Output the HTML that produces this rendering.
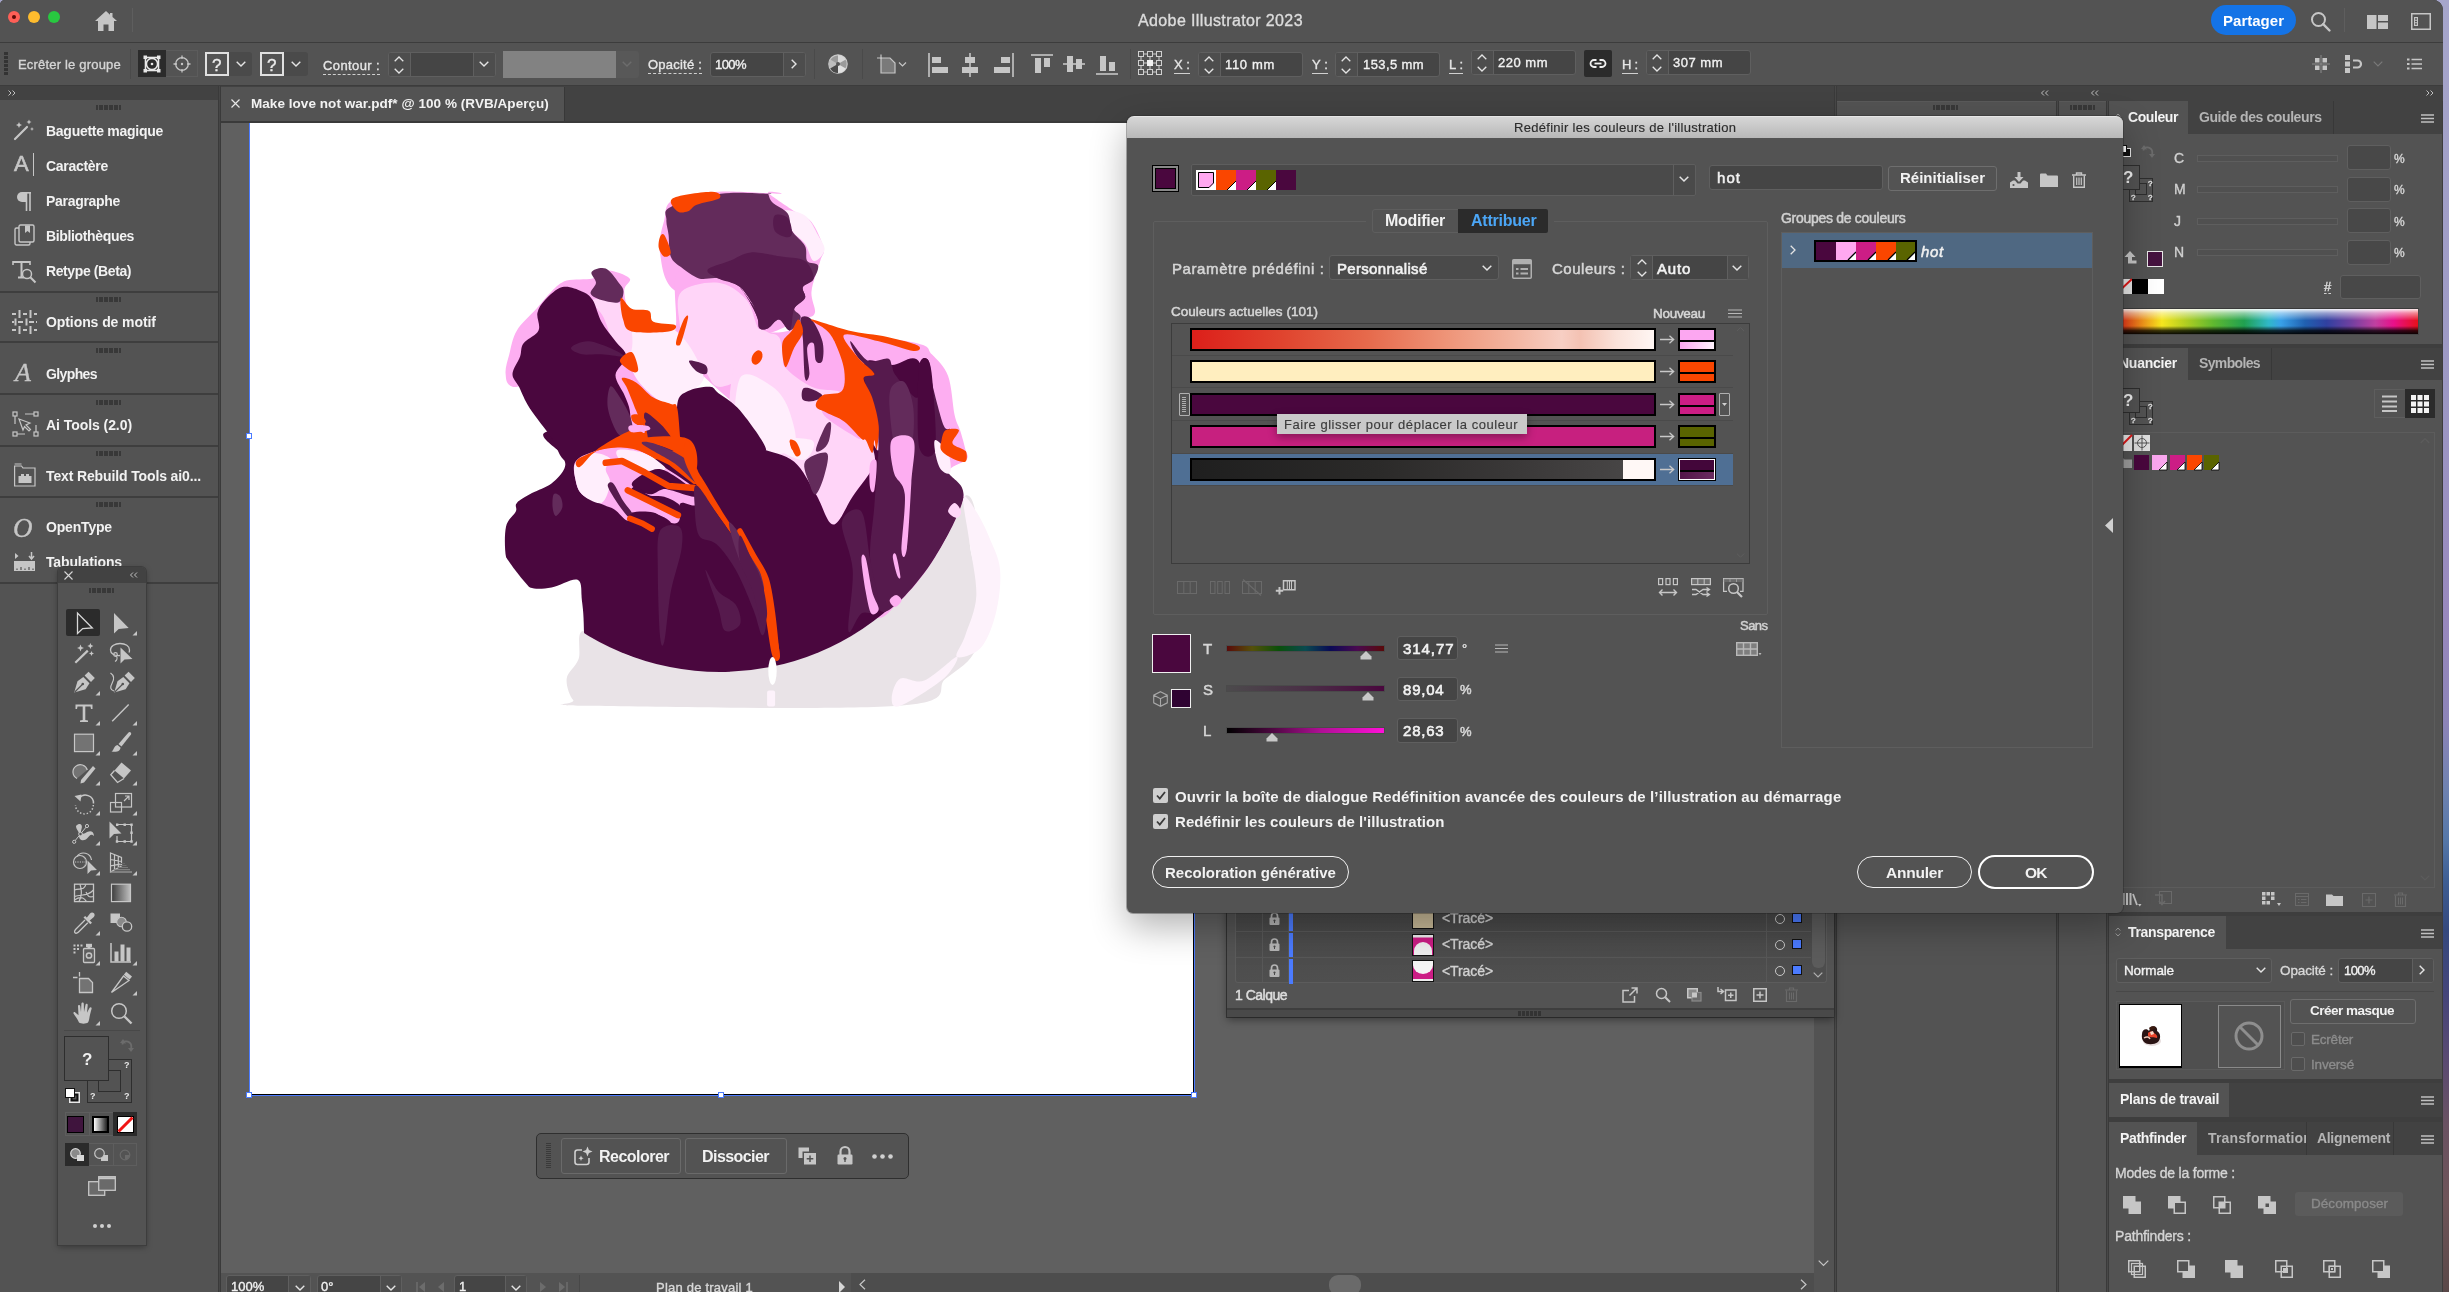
<!DOCTYPE html>
<html lang="fr"><head><meta charset="utf-8"><title>Adobe Illustrator 2023</title>
<style>
html,body{margin:0;padding:0}
body{width:2449px;height:1292px;overflow:hidden;position:relative;background:linear-gradient(180deg,#a6a6cb 0%,#9c98c4 30%,#9888bd 48%,#8c84b8 56%,#6f82b0 61%,#5577a8 65%,#3f5f94 68%,#35497e 72%,#45457a 77%,#5a4a72 82%,#6a5262 87%,#6e5458 93%,#5a4848 100%);font-family:"Liberation Sans",sans-serif;font-size:13px;color:#dedede}
.a{position:absolute;box-sizing:border-box}
.t{position:absolute;white-space:nowrap;line-height:1;font-size:13px;color:#dedede}
.b{font-weight:bold}
.w{color:#f2f2f2}
.dim{color:#8a8a8a}
svg{position:absolute;overflow:visible}
.fld{position:absolute;box-sizing:border-box;background:#454545;border:1px solid #5f5f5f;border-radius:3px}
.vd{position:absolute;width:1px;background:#5f5f5f}
.grip{position:absolute;height:5px;width:25px!important;background:linear-gradient(90deg,#383838 0 2px,transparent 2px 3px,#383838 3px 7px,transparent 7px 8px,#383838 8px 12px,transparent 12px 13px,#383838 13px 17px,transparent 17px 18px,#383838 18px 22px,transparent 22px 23px,#383838 23px 25px)}
#win{left:0;top:0;width:2443px;height:1292px;background:#535353;border-radius:5px 10px 0 0;overflow:hidden;box-shadow:inset 1px 1px 0 #474747,inset -1px 0 0 #3d3d3d}
.t:not(.b){-webkit-text-stroke:0.35px currentColor}
#dlg .t:not(.b){-webkit-text-stroke:0.5px currentColor}
.t{will-change:transform}

</style></head>
<body>
<div class="a" id="win">
<!-- title bar -->
<div class="a" style="left:0;top:0;width:2443px;height:42px;background:#535353"></div>
<div class="a" style="left:0;top:42px;width:2443px;height:1px;background:#3c3c3c"></div>
<div class="a" style="left:8px;top:11px;width:12px;height:12px;border-radius:50%;background:#fe5f57"></div>
<div class="a" style="left:12px;top:15px;width:4px;height:4px;border-radius:50%;background:#5a0a06"></div>
<div class="a" style="left:28px;top:11px;width:12px;height:12px;border-radius:50%;background:#febc2e"></div>
<div class="a" style="left:48px;top:11px;width:12px;height:12px;border-radius:50%;background:#28c840"></div>
<svg style="left:94px;top:10px" width="24" height="22" viewBox="0 0 24 22"><path d="M12 1 L1 11 H4 V21 H9.5 V14.5 H14.5 V21 H20 V11 H23 L18.5 7 V3 H16 V4.7 Z" fill="#c6c6c6"></path></svg>
<div class="a" style="left:132px;top:8px;width:1px;height:24px;background:#5e5e5e"></div>
<span class="t" style="left: 1138px; font-size: 16px; color: rgb(220, 220, 220); letter-spacing: 0.38px; top: 12.5px;">Adobe Illustrator 2023</span>
<div class="a" style="left:2211px;top:5px;width:85px;height:30px;border-radius:15px;background:#1473e6"></div>
<span class="t b" style="left: 2223px; font-size: 15px; color: rgb(255, 255, 255); letter-spacing: 0.02px; top: 13.3px;">Partager</span>
<svg style="left:2308px;top:9px" width="24" height="24" viewBox="0 0 24 24"><circle cx="10.5" cy="10.5" r="6.5" fill="none" stroke="#c6c6c6" stroke-width="2"></circle><path d="M15.2 15.2 L21.5 21.5" stroke="#c6c6c6" stroke-width="2.4" stroke-linecap="round"></path></svg>
<div class="a" style="left:2344px;top:8px;width:1px;height:24px;background:#5e5e5e"></div>
<svg style="left:2367px;top:15px" width="21" height="14" viewBox="0 0 21 14"><path d="M0 0 H9.5 V14 H0 Z M11 0 H21 V6 H11 Z M11 7.5 H21 V14 H11 Z" fill="#c6c6c6"></path></svg>
<svg style="left:2411px;top:13px" width="20" height="17" viewBox="0 0 20 17"><rect x="0.75" y="0.75" width="18.5" height="15.5" fill="none" stroke="#c6c6c6" stroke-width="1.5"></rect><rect x="3" y="4" width="4" height="9" fill="#c6c6c6"></rect><rect x="4" y="5.3" width="2" height="1.4" fill="#535353"></rect><rect x="4" y="7.8" width="2" height="1.4" fill="#535353"></rect><rect x="4" y="10.3" width="2" height="1.4" fill="#535353"></rect></svg>
<!-- control bar -->
<div class="a" style="left:0;top:43px;width:2443px;height:42px;background:#535353"></div>
<div class="a" style="left:0;top:85px;width:2443px;height:1px;background:#3c3c3c"></div>
</div>
<div class="a" id="ctl" style="left:0;top:0;width:2443px;height:86px">
<div class="a" style="left:4px;top:52px;width:4px;height:24px;background:repeating-linear-gradient(180deg,#333 0 3px,transparent 3px 4px)"></div>
<span class="t" style="left: 18px; color: rgb(212, 212, 212); letter-spacing: 0.19px; top: 58px;">Ecrêter le groupe</span>
<div class="a" style="left:130px;top:49px;width:1px;height:30px;background:#4a4a4a"></div>
<div class="a" style="left:138px;top:50px;width:28px;height:27px;background:#2b2b2b"></div>
<svg style="left:143px;top:55px" width="18" height="18" viewBox="0 0 18 18"><rect x="2.5" y="2.5" width="13" height="13" fill="none" stroke="#e8e8e8" stroke-width="1.6"></rect><circle cx="9" cy="9" r="5.6" fill="none" stroke="#e8e8e8" stroke-width="1.6"></circle><circle cx="9" cy="9" r="1.3" fill="#e8e8e8"></circle><path d="M0.5 0.5h3.5v3.5h-3.5z M14 0.5h3.5v3.5H14z M0.5 14h3.5v3.5h-3.5z M14 14h3.5v3.5H14z" fill="#e8e8e8"></path></svg>
<div class="a" style="left:166px;top:50px;width:32px;height:27px;border:1px solid #5c5c5c;border-left:none"></div>
<svg style="left:173px;top:55px" width="18" height="18" viewBox="0 0 18 18"><circle cx="9" cy="9" r="6.3" fill="none" stroke="#c6c6c6" stroke-width="1.3"></circle><circle cx="9" cy="9" r="1.2" fill="#c6c6c6"></circle><path d="M9 0.5V4 M9 14V17.5 M0.5 9H4 M14 9H17.5" stroke="#c6c6c6" stroke-width="1.3"></path></svg>
<!-- ? boxes -->
<div class="a" style="left:228px;top:52px;width:24px;height:24px;background:#4a4a4a;border-radius:0 3px 3px 0"></div>
<div class="a" style="left:205px;top:52px;width:24px;height:24px;border:2px solid #e0e0e0;background:#535353"></div>
<span class="t" style="left: 212px; font-size: 17px; color: rgb(238, 238, 238); top: 56.6px;">?</span>
<svg style="left:236px;top:61px" width="10" height="6" viewBox="0 0 10 6"><path d="M0.7 0.7 L5 5 L9.3 0.7" fill="none" stroke="#e4e4e4" stroke-width="1.4"></path></svg>
<div class="a" style="left:283px;top:52px;width:25px;height:24px;background:#4a4a4a;border-radius:0 3px 3px 0"></div>
<div class="a" style="left:260px;top:52px;width:24px;height:24px;border:2px solid #e0e0e0;background:#535353"></div>
<span class="t" style="left: 267px; font-size: 17px; color: rgb(238, 238, 238); top: 56.6px;">?</span>
<svg style="left:291px;top:61px" width="10" height="6" viewBox="0 0 10 6"><path d="M0.7 0.7 L5 5 L9.3 0.7" fill="none" stroke="#e4e4e4" stroke-width="1.4"></path></svg>
<span class="t" style="left: 323px; color: rgb(230, 230, 230); border-bottom: 1px dashed rgb(208, 208, 208); padding-bottom: 2px; letter-spacing: 0.39px; top: 59px;">Contour :</span>
<!-- stroke weight stepper -->
<div class="fld" style="left:388px;top:52px;width:108px;height:25px"></div>
<div class="a" style="left:389px;top:53px;width:21px;height:23px;background:#4d4d4d;border-radius:2px 0 0 2px"></div>
<div class="a" style="left:474px;top:53px;width:21px;height:23px;background:#4d4d4d;border-radius:0 2px 2px 0"></div>
<div class="vd" style="left:410px;top:53px;height:23px"></div>
<div class="vd" style="left:473px;top:53px;height:23px"></div>
<svg style="left:394px;top:56px" width="10" height="18" viewBox="0 0 10 18"><path d="M0.7 5.3 L5 1 L9.3 5.3 M0.7 12.7 L5 17 L9.3 12.7" fill="none" stroke="#e4e4e4" stroke-width="1.3"></path></svg>
<svg style="left:479px;top:61px" width="10" height="6" viewBox="0 0 10 6"><path d="M0.7 0.7 L5 5 L9.3 0.7" fill="none" stroke="#e4e4e4" stroke-width="1.4"></path></svg>
<!-- brush gray -->
<div class="a" style="left:503px;top:51px;width:113px;height:27px;background:#828282"></div>
<div class="a" style="left:616px;top:51px;width:23px;height:27px;background:#585858;border-radius:0 3px 3px 0"></div>
<svg style="left:622px;top:61px" width="10" height="6" viewBox="0 0 10 6"><path d="M0.7 0.7 L5 5 L9.3 0.7" fill="none" stroke="#6c6c6c" stroke-width="1.4"></path></svg>
<span class="t" style="left: 648px; color: rgb(230, 230, 230); border-bottom: 1px dashed rgb(208, 208, 208); padding-bottom: 2px; letter-spacing: 0.22px; top: 58px;">Opacité :</span>
<div class="fld" style="left:710px;top:52px;width:96px;height:25px"></div>
<div class="a" style="left:784px;top:53px;width:21px;height:23px;background:#4d4d4d;border-radius:0 2px 2px 0"></div>
<div class="vd" style="left:783px;top:53px;height:23px"></div>
<span class="t w" style="left: 715px; letter-spacing: -0.56px; top: 58px;">100%</span>
<svg style="left:791px;top:59px" width="6" height="10" viewBox="0 0 6 10"><path d="M0.7 0.7 L5 5 L0.7 9.3" fill="none" stroke="#e4e4e4" stroke-width="1.4"></path></svg>
<div class="a" style="left:814px;top:49px;width:1px;height:30px;background:#4a4a4a"></div>
<!-- globe / recolor -->
<svg style="left:828px;top:54px" width="20" height="20" viewBox="0 0 20 20"><circle cx="10" cy="10" r="9.2" fill="#9a9a9a" stroke="#c8c8c8" stroke-width="1.2"></circle><path d="M10 10 L10 1 A9 9 0 0 1 17.8 5.5 Z" fill="#d8d8d8"></path><path d="M10 10 L17.8 14.5 A9 9 0 0 1 10 19 Z" fill="#e0e0e0"></path><path d="M10 10 L2.2 14.5 A9 9 0 0 1 2.2 5.5 Z" fill="#bdbdbd"></path><path d="M10 10 L10 19 A9 9 0 0 1 2.2 14.5 Z" fill="#4a4a4a"></path><circle cx="10" cy="10" r="2" fill="#555"></circle></svg>
<div class="a" style="left:862px;top:49px;width:1px;height:30px;background:#4a4a4a"></div>
<!-- artboard icon -->
<svg style="left:876px;top:54px" width="32" height="22" viewBox="0 0 32 22"><path d="M5 4 H14 L19 9 V19 H5 Z" fill="#7a7a7a" stroke="#c6c6c6" stroke-width="1.2"></path><path d="M1 4H6 M5 0.5V5" stroke="#c6c6c6" stroke-width="1.2"></path><path d="M23 8.5 L26.5 12 L30 8.5" fill="none" stroke="#c6c6c6" stroke-width="1.2"></path></svg>
<!-- align icons -->
<svg style="left:928px;top:53px" width="20" height="24" viewBox="0 0 20 24"><path d="M1 0V24" stroke="#c6c6c6" stroke-width="1.6"></path><rect x="4" y="4" width="9" height="6" fill="#c6c6c6"></rect><rect x="4" y="14" width="16" height="6" fill="#c6c6c6"></rect></svg>
<svg style="left:961px;top:53px" width="18" height="24" viewBox="0 0 18 24"><path d="M9 0V24" stroke="#c6c6c6" stroke-width="1.6"></path><rect x="4" y="4" width="10" height="6" fill="#c6c6c6"></rect><rect x="1" y="14" width="16" height="6" fill="#c6c6c6"></rect></svg>
<svg style="left:994px;top:53px" width="20" height="24" viewBox="0 0 20 24"><path d="M19 0V24" stroke="#c6c6c6" stroke-width="1.6"></path><rect x="7" y="4" width="9" height="6" fill="#c6c6c6"></rect><rect x="0" y="14" width="16" height="6" fill="#c6c6c6"></rect></svg>
<svg style="left:1031px;top:54px" width="22" height="20" viewBox="0 0 22 20"><path d="M0 1H22" stroke="#c6c6c6" stroke-width="1.6"></path><rect x="4" y="4" width="6" height="15" fill="#c6c6c6"></rect><rect x="13" y="4" width="6" height="9" fill="#c6c6c6"></rect></svg>
<svg style="left:1063px;top:55px" width="22" height="18" viewBox="0 0 22 18"><path d="M0 9H22" stroke="#c6c6c6" stroke-width="1.6"></path><rect x="4" y="1" width="6" height="16" fill="#c6c6c6"></rect><rect x="13" y="4" width="6" height="10" fill="#c6c6c6"></rect></svg>
<svg style="left:1096px;top:55px" width="22" height="20" viewBox="0 0 22 20"><path d="M0 19H22" stroke="#c6c6c6" stroke-width="1.6"></path><rect x="4" y="1" width="6" height="15" fill="#c6c6c6"></rect><rect x="13" y="7" width="6" height="9" fill="#c6c6c6"></rect></svg>
<div class="a" style="left:1130px;top:49px;width:1px;height:30px;background:#4a4a4a"></div>
<!-- ref point -->
<svg style="left:1138px;top:51px" width="24" height="24" viewBox="0 0 24 24"><g fill="none" stroke="#d0d0d0" stroke-width="1"><rect x="0.5" y="0.5" width="5" height="5"></rect><rect x="9.5" y="0.5" width="5" height="5"></rect><rect x="18.5" y="0.5" width="5" height="5"></rect><rect x="0.5" y="9.5" width="5" height="5"></rect><rect x="18.5" y="9.5" width="5" height="5"></rect><rect x="0.5" y="18.5" width="5" height="5"></rect><rect x="9.5" y="18.5" width="5" height="5"></rect><rect x="18.5" y="18.5" width="5" height="5"></rect><path d="M6 3H9 M15 3H18 M6 21H9 M15 21H18 M3 6V9 M3 15V18 M21 6V9 M21 15V18 M6 12H9 M15 12H18 M12 6V9 M12 15V18"></path></g><rect x="9" y="9" width="6" height="6" fill="#f0f0f0"></rect></svg>
<span class="t" style="left: 1174px; color: rgb(230, 230, 230); border-bottom: 1px solid rgb(208, 208, 208); padding-bottom: 2px; letter-spacing: 0.03px; top: 58px;">X :</span>
<div class="fld" style="left:1198px;top:52px;width:105px;height:25px"></div>
<div class="a" style="left:1199px;top:53px;width:21px;height:23px;background:#4d4d4d;border-radius:2px 0 0 2px"></div>
<div class="vd" style="left:1220px;top:53px;height:23px"></div>
<svg style="left:1204px;top:56px" width="10" height="18" viewBox="0 0 10 18"><path d="M0.7 5.3 L5 1 L9.3 5.3 M0.7 12.7 L5 17 L9.3 12.7" fill="none" stroke="#e4e4e4" stroke-width="1.3"></path></svg>
<span class="t w" style="left: 1225px; letter-spacing: 0.67px; top: 58px;">110 mm</span>
<span class="t" style="left: 1312px; color: rgb(230, 230, 230); border-bottom: 1px solid rgb(208, 208, 208); padding-bottom: 2px; letter-spacing: 0.11px; top: 58px;">Y :</span>
<div class="fld" style="left:1335px;top:52px;width:105px;height:25px"></div>
<div class="a" style="left:1336px;top:53px;width:21px;height:23px;background:#4d4d4d;border-radius:2px 0 0 2px"></div>
<div class="vd" style="left:1357px;top:53px;height:23px"></div>
<svg style="left:1341px;top:56px" width="10" height="18" viewBox="0 0 10 18"><path d="M0.7 5.3 L5 1 L9.3 5.3 M0.7 12.7 L5 17 L9.3 12.7" fill="none" stroke="#e4e4e4" stroke-width="1.3"></path></svg>
<span class="t w" style="left: 1363px; letter-spacing: 0.4px; top: 58px;">153,5 mm</span>
<span class="t" style="left: 1449px; color: rgb(230, 230, 230); border-bottom: 1px solid rgb(208, 208, 208); padding-bottom: 2px; letter-spacing: 0.01px; top: 58px;">L :</span>
<div class="fld" style="left:1471px;top:50px;width:105px;height:25px"></div>
<div class="a" style="left:1472px;top:51px;width:21px;height:23px;background:#4d4d4d;border-radius:2px 0 0 2px"></div>
<div class="vd" style="left:1493px;top:51px;height:23px"></div>
<svg style="left:1477px;top:54px" width="10" height="18" viewBox="0 0 10 18"><path d="M0.7 5.3 L5 1 L9.3 5.3 M0.7 12.7 L5 17 L9.3 12.7" fill="none" stroke="#e4e4e4" stroke-width="1.3"></path></svg>
<span class="t w" style="left: 1498px; letter-spacing: 0.51px; top: 56px;">220 mm</span>
<div class="a" style="left:1584px;top:50px;width:28px;height:27px;background:#2b2b2b;border-radius:2px"></div>
<svg style="left:1589px;top:58px" width="18" height="11" viewBox="0 0 18 11"><path d="M7.5 2 H5 A3.5 3.5 0 0 0 5 9 H7.5 M10.5 2 H13 A3.5 3.5 0 0 1 13 9 H10.5" fill="none" stroke="#f0f0f0" stroke-width="1.8"></path><path d="M5.5 5.5 H12.5" stroke="#f0f0f0" stroke-width="1.8"></path></svg>
<span class="t" style="left: 1622px; color: rgb(230, 230, 230); border-bottom: 1px solid rgb(208, 208, 208); padding-bottom: 2px; letter-spacing: -0.21px; top: 58px;">H :</span>
<div class="fld" style="left:1646px;top:50px;width:105px;height:25px"></div>
<div class="a" style="left:1647px;top:51px;width:21px;height:23px;background:#4d4d4d;border-radius:2px 0 0 2px"></div>
<div class="vd" style="left:1668px;top:51px;height:23px"></div>
<svg style="left:1652px;top:54px" width="10" height="18" viewBox="0 0 10 18"><path d="M0.7 5.3 L5 1 L9.3 5.3 M0.7 12.7 L5 17 L9.3 12.7" fill="none" stroke="#e4e4e4" stroke-width="1.3"></path></svg>
<span class="t w" style="left: 1673px; letter-spacing: 0.51px; top: 56px;">307 mm</span>
<!-- right icons -->
<svg style="left:2312px;top:55px" width="18" height="18" viewBox="0 0 18 18"><path d="M9 0V18 M0 9H18" stroke="#8c8c8c" stroke-width="1"></path><rect x="3" y="3" width="4.5" height="4.5" fill="#c6c6c6"></rect><rect x="10.5" y="3" width="4.5" height="4.5" fill="#c6c6c6"></rect><rect x="3" y="10.5" width="4.5" height="4.5" fill="#c6c6c6"></rect><rect x="10.5" y="10.5" width="4.5" height="4.5" fill="#c6c6c6"></rect></svg>
<svg style="left:2345px;top:55px" width="20" height="18" viewBox="0 0 20 18"><rect x="0" y="0" width="5" height="5" fill="#c6c6c6"></rect><rect x="0" y="6.5" width="5" height="5" fill="#c6c6c6"></rect><rect x="0" y="13" width="5" height="5" fill="#c6c6c6"></rect><path d="M8 5.5 H12.5 A3.5 3.5 0 0 1 12.5 12.5 H8" fill="none" stroke="#c6c6c6" stroke-width="2.2"></path></svg>
<svg style="left:2373px;top:61px" width="10" height="6" viewBox="0 0 10 6"><path d="M0.7 0.7 L5 5 L9.3 0.7" fill="none" stroke="#7a7a7a" stroke-width="1.2"></path></svg>
<svg style="left:2407px;top:58px" width="15" height="12" viewBox="0 0 15 12"><path d="M0 1.5H2.5 M0 6H2.5 M0 10.5H2.5" stroke="#c6c6c6" stroke-width="2"></path><path d="M4.5 1.5H15 M4.5 6H15 M4.5 10.5H15" stroke="#c6c6c6" stroke-width="1.4"></path></svg>
</div>
<div class="a" id="left" style="left:0;top:86px;width:221px;height:1206px">
<div class="a" style="left:0;top:0;width:218px;height:14px;background:#424242"></div>
<div class="a" style="left:0;top:14px;width:218px;height:1192px;background:#535353"></div>
<div class="a" style="left:218px;top:0;width:1px;height:1206px;background:#3a3a3a"></div>
<div class="a" style="left:219px;top:0;width:1px;height:1206px;background:#464646"></div>
<div class="a" style="left:220px;top:0;width:1px;height:1206px;background:#3a3a3a"></div>
<svg style="left:8px;top:4px" width="8" height="6" viewBox="0 0 8 6"><path d="M0.5 0.5 L3 3 L0.5 5.5 M4.5 0.5 L7 3 L4.5 5.5" fill="none" stroke="#c0c0c0" stroke-width="1"></path></svg>
<div class="grip" style="left:96px;top:19px"></div>
<span class="t b w" style="left: 46px; font-size: 14px; letter-spacing: -0.27px; top: 38.1px;">Baguette magique</span>
<span class="t b w" style="left: 46px; font-size: 14px; letter-spacing: -0.29px; top: 73.1px;">Caractère</span>
<span class="t b w" style="left: 46px; font-size: 14px; letter-spacing: -0.3px; top: 108.1px;">Paragraphe</span>
<span class="t b w" style="left: 46px; font-size: 14px; letter-spacing: -0.35px; top: 143.1px;">Bibliothèques</span>
<span class="t b w" style="left: 46px; font-size: 14px; letter-spacing: -0.4px; top: 178.1px;">Retype (Beta)</span>
<div class="a" style="left:0;top:205px;width:218px;height:2px;background:#3e3e3e"></div>
<div class="grip" style="left:96px;top:211px"></div>
<span class="t b w" style="left: 46px; font-size: 14px; letter-spacing: -0.08px; top: 229.1px;">Options de motif</span>
<div class="a" style="left:0;top:255px;width:218px;height:2px;background:#3e3e3e"></div>
<div class="grip" style="left:96px;top:262px"></div>
<span class="t b w" style="left: 46px; font-size: 14px; letter-spacing: -0.61px; top: 281.1px;">Glyphes</span>
<div class="a" style="left:0;top:307px;width:218px;height:2px;background:#3e3e3e"></div>
<div class="grip" style="left:96px;top:314px"></div>
<span class="t b w" style="left: 46px; font-size: 14px; letter-spacing: -0.06px; top: 332.1px;">Ai Tools (2.0)</span>
<div class="a" style="left:0;top:359px;width:218px;height:2px;background:#3e3e3e"></div>
<div class="grip" style="left:96px;top:365px"></div>
<span class="t b w" style="left: 46px; font-size: 14px; letter-spacing: -0.13px; top: 383.1px;">Text Rebuild Tools ai0...</span>
<div class="a" style="left:0;top:410px;width:218px;height:2px;background:#3e3e3e"></div>
<div class="grip" style="left:96px;top:416px"></div>
<span class="t b w" style="left: 46px; font-size: 14px; letter-spacing: -0.18px; top: 434.1px;">OpenType</span>
<span class="t b w" style="left: 46px; font-size: 14px; letter-spacing: -0.14px; top: 469.1px;">Tabulations</span>
<div class="a" style="left:0;top:496px;width:218px;height:2px;background:#3e3e3e"></div>
<!-- panel icons -->
<svg style="left:13px;top:33px" width="24" height="24" viewBox="0 0 24 24"><path d="M2 20 L14 8" stroke="#c6c6c6" stroke-width="2.2" stroke-linecap="round"></path><path d="M6 3 l0.9 2.1 2.1 0.9 -2.1 0.9 -0.9 2.1 -0.9 -2.1 -2.1 -0.9 2.1 -0.9z M16 0.5 l0.8 1.7 1.7 0.8 -1.7 0.8 -0.8 1.7 -0.8 -1.7 -1.7 -0.8 1.7 -0.8z M19 8 l0.6 1.4 1.4 0.6 -1.4 0.6 -0.6 1.4 -0.6 -1.4 -1.4 -0.6 1.4 -0.6z" fill="#c6c6c6"></path></svg>
<span class="t" style="left: 14px; font-size: 22px; color: rgb(198, 198, 198); -webkit-text-stroke: 0.6px rgb(198, 198, 198); top: 67.4px;">A</span>
<div class="a" style="left:33px;top:67px;width:1px;height:23px;background:#c6c6c6"></div>
<svg style="left:16px;top:106px" width="16" height="20" viewBox="0 0 16 20"><path d="M14 0 V19 M10.5 0 V19" stroke="#c6c6c6" stroke-width="1.6"></path><path d="M11 0 H6 A5 5 0 0 0 6 10 H11 Z" fill="#c6c6c6"></path><path d="M8 0.8 H15" stroke="#c6c6c6" stroke-width="1.6"></path></svg>
<svg style="left:14px;top:138px" width="22" height="22" viewBox="0 0 22 22"><rect x="1" y="4" width="15" height="17" rx="1.5" fill="none" stroke="#c6c6c6" stroke-width="1.4"></rect><rect x="5" y="1" width="15" height="17" rx="1.5" fill="#535353" stroke="#c6c6c6" stroke-width="1.4"></rect><path d="M11 1.5 V9 L13.5 7 L16 9 V1.5 Z" fill="#c6c6c6"></path></svg>
<svg style="left:12px;top:174px" width="26" height="24" viewBox="0 0 26 24"><path d="M1 2 H18 M9.5 2 V17 M6 17.5 H12" stroke="#c6c6c6" stroke-width="2"></path><path d="M1 1 V5 M18 1 V5" stroke="#c6c6c6" stroke-width="1.6"></path><circle cx="15" cy="14" r="4.5" fill="#535353" stroke="#c6c6c6" stroke-width="1.5"></circle><path d="M18.3 17.3 L23.5 22.5" stroke="#c6c6c6" stroke-width="2"></path></svg>
<svg style="left:12px;top:224px" width="25" height="24" viewBox="0 0 25 24"><g stroke="#c6c6c6" stroke-width="2"><path d="M0 4H4 M7.5 0V8 M11 4H15 M18.5 0V8 M22 4H25"></path><path d="M3.5 8.5V15.5 M0 12H2 M6 12H11 M14.5 8.5V15.5 M17 12H22 M24 12H25"></path><path d="M0 20H4 M7.5 16V24 M11 20H15 M18.5 16V24 M22 20H25"></path></g></svg>
<span class="t" style="left: 15px; font-size: 26px; color: rgb(198, 198, 198); font-family: &quot;Liberation Serif&quot;, &quot;DejaVu Serif&quot;, serif; font-style: italic; top: 274px;">A</span>
<svg style="left:12px;top:324.500px" width="28" height="27" viewBox="0 0 28 27"><g fill="none" stroke="#c6c6c6" stroke-width="1.2"><rect x="1" y="1" width="4" height="4"></rect><rect x="22" y="1" width="4" height="4"></rect><rect x="1" y="21" width="4" height="4"></rect><rect x="22" y="21" width="4" height="4"></rect><path d="M13 3H22 M3 5V13 M5 23H13 M24 14V21"></path><path d="M7 8 L18 12 L14 14 L18.5 18.5 L17 20 L12.5 15.5 L11 19 Z"></path></g></svg>
<svg style="left:14px;top:377px" width="22" height="24" viewBox="0 0 22 24"><path d="M0.6 3 V23 H21 V5 H9 L7.5 3 Z M0.6 1 H7.5" fill="none" stroke="#c6c6c6" stroke-width="1.2"></path><path d="M4.5 20 V13 H7 V11 H10 V13 H12 V11 H15 V13 H17.5 V20 Z" fill="#c6c6c6"></path></svg>
<span class="t" style="left: 13px; font-size: 27px; color: rgb(198, 198, 198); font-family: &quot;Liberation Serif&quot;, serif; font-style: italic; top: 428.6px;">O</span>
<svg style="left:14px;top:466px" width="22" height="20" viewBox="0 0 22 20"><path d="M0 9 H21 V19 H0 Z" fill="#c6c6c6"></path><path d="M3 16.5v1.5 M7 15v3 M11 16.5v1.5 M15 15v3 M19 16.5v1.5" stroke="#535353" stroke-width="1.2"></path><path d="M1 1 L4.5 4 L1 7 Z" fill="#c6c6c6"></path><path d="M17.5 0 V6 M15 4 L17.5 7 L20 4" stroke="#c6c6c6" stroke-width="1.5" fill="none"></path></svg>
</div>
<div class="a" id="doc" style="left:221px;top:86px;width:1616px;height:1206px;background:#424242;overflow:hidden">
<div class="a" style="left:0;top:1px;width:343px;height:34px;background:#535353"></div>
<div class="a" style="left:343px;top:1px;width:1px;height:34px;background:#383838"></div>
<div class="a" style="left:0;top:35px;width:1616px;height:2px;background:#3a3a3a"></div>
<svg style="left:10px;top:13px" width="9" height="9" viewBox="0 0 9 9"><path d="M0.5 0.5 L8.5 8.5 M8.5 0.5 L0.5 8.5" stroke="#e6e6e6" stroke-width="1.2"></path></svg>
<span class="t b w" style="left: 30px; font-size: 13.5px; letter-spacing: 0.05px; top: 10.6px;">Make love not war.pdf* @ 100 % (RVB/Aperçu)</span>
<div class="a" style="left:0;top:37px;width:1593px;height:1150px;background:#606060"></div>
<div class="a" style="left:28px;top:37px;width:945px;height:972px;background:#fff;border-right:1px solid #000;border-bottom:1px solid #000"></div>
<div class="a" style="left:-221px;top:-86px;width:1220px;height:1000px"><svg style="left:0;top:0" width="1220" height="1000" viewBox="0 0 1220 1000">
<defs><clipPath id="circ"><circle cx="720" cy="415" r="257"></circle></clipPath></defs>
<path d="M584.1 630.8 C575.2 631.1 581.5 651.0 578.6 658.9 C575.7 666.9 567.6 671.6 566.7 678.5 C565.8 685.3 569.6 695.6 573.2 700.1 C576.8 704.7 534.0 704.8 588.4 705.8 C642.7 706.7 839.7 710.3 899.3 705.8 C958.9 701.2 933.1 688.1 945.9 678.5 C958.8 668.8 970.7 662.6 976.3 648.1 C981.9 633.7 980.6 609.1 979.5 591.7 C978.5 574.4 970.5 557.4 969.8 544.1 C969.1 530.7 976.3 519.3 975.2 511.5 C974.1 503.8 970.0 489.9 963.3 497.4 C956.6 505.0 947.0 538.8 935.1 557.1 C923.2 575.3 909.8 591.7 891.7 606.9 C873.7 622.1 852.0 637.6 826.7 648.1 C801.4 658.6 761.7 666.2 740.0 669.8 C718.3 673.4 714.8 672.0 696.8 669.8 C678.7 667.6 650.5 663.3 631.7 656.8 C613.0 650.3 592.9 630.4 584.1 630.8Z" fill="#e9e3e7"></path>
<path d="M963.3 497.4 C964.4 492.0 972.0 504.9 976.3 511.5 C980.6 518.2 985.3 527.8 989.3 537.6 C993.3 547.3 999.1 557.4 1000.1 570.1 C1001.2 582.7 999.1 600.4 995.8 613.4 C992.5 626.4 987.1 640.9 980.6 648.1 C974.1 655.3 959.3 658.9 956.8 656.8 C954.2 654.6 962.2 645.2 965.4 635.1 C968.7 625.0 975.6 611.3 976.3 596.1 C977.0 580.9 972.0 560.5 969.8 544.1 C967.6 527.6 962.2 502.9 963.3 497.4Z" fill="#fdf2fb"></path>
<path d="M891.7 698.0 C891.7 693.4 895.0 681.3 900.4 678.5 C905.8 675.6 914.9 684.2 924.3 680.6 C933.7 677.0 953.5 657.1 956.8 656.8 C960.0 656.4 953.2 670.3 943.8 678.5 C934.4 686.6 909.1 702.5 900.4 705.8 C891.7 709.0 891.7 702.5 891.7 698.0Z" fill="#fdf2fb"></path>
<path d="M505.6 373.8 C505.0 368.4 507.4 361.5 509.3 354.3 C511.1 347.0 512.3 338.0 516.9 330.4 C521.4 322.8 530.6 315.2 536.4 308.7 C542.1 302.2 546.5 296.1 551.5 291.4 C556.6 286.7 559.8 282.7 566.7 280.6 C573.6 278.4 586.0 280.1 592.7 278.4 C599.4 276.7 600.7 270.2 606.8 270.2 C613.0 270.2 626.7 274.8 629.6 278.4 C632.5 281.9 623.8 284.2 624.2 291.4 C624.5 298.6 628.3 314.5 631.7 321.7 C635.2 329.0 637.5 330.4 644.8 334.8 C652.0 339.1 665.3 340.9 675.1 347.8 C684.9 354.6 701.8 368.0 703.3 375.9 C704.7 383.9 688.5 390.0 683.8 395.4 C679.1 400.9 680.9 402.7 675.1 408.5 C669.3 414.2 656.3 424.4 649.1 430.1 C641.9 435.9 638.2 443.1 631.7 443.1 C625.2 443.1 624.5 439.5 610.1 430.1 C595.6 420.7 561.3 394.0 545.0 386.8 C528.8 379.6 519.1 388.9 512.5 386.8 C505.9 384.6 506.1 379.2 505.6 373.8Z" fill="#fdaef1"></path>
<path d="M664.3 219.9 C666.4 211.2 663.9 205.0 672.9 200.3 C682.0 195.7 700.6 192.8 718.5 191.7 C736.3 190.6 771.7 193.7 780.0 193.8 C788.3 194.0 765.8 189.9 768.2 192.8 C770.5 195.7 787.0 206.3 794.2 211.2 C801.4 216.1 806.7 215.9 811.5 222.0 C816.4 228.2 822.0 241.5 823.5 248.0 C824.9 254.5 822.2 253.8 820.2 261.0 C818.2 268.3 812.4 282.7 811.5 291.4 C810.6 300.1 816.4 308.4 814.8 313.1 C813.2 317.8 810.6 316.0 801.8 319.6 C792.9 323.2 772.0 334.4 761.7 334.8 C751.4 335.1 743.6 327.5 740.0 321.7 C736.4 316.0 750.8 305.1 740.1 300.1 C729.5 295.0 689.6 299.3 676.2 291.4 C662.8 283.4 661.9 264.3 659.9 252.4 C657.9 240.5 662.1 228.5 664.3 219.9Z" fill="#fdaef1"></path>
<path d="M783.4 211.2 C785.5 208.7 799.3 211.5 805.0 215.5 C810.8 219.5 814.8 229.3 818.0 235.0 C821.3 240.8 825.3 245.9 824.5 250.2 C823.8 254.5 817.0 262.1 813.7 261.0 C810.5 260.0 808.6 248.8 805.0 243.7 C801.4 238.6 795.6 236.1 792.0 230.7 C788.4 225.3 781.2 213.7 783.4 211.2Z" fill="#ffeefc"></path>
<path d="M676.2 274.1 C679.6 266.8 686.1 276.2 696.8 278.4 C707.4 280.6 732.9 285.6 740.1 287.1 C747.3 288.5 736.8 280.2 740.0 287.1 C743.2 293.9 751.2 321.0 759.5 328.2 C767.8 335.5 782.8 331.9 789.9 330.4 C796.9 328.9 792.0 318.8 801.8 319.1 C811.5 319.5 829.1 328.5 848.4 332.6 C867.7 336.6 903.8 339.8 917.8 343.4 C931.7 347.0 926.8 348.8 931.8 354.3 C936.9 359.7 944.3 365.8 948.1 375.9 C951.9 386.1 952.6 405.9 954.6 415.0 C956.6 424.0 958.2 424.4 960.0 430.1 C961.8 435.9 964.4 444.7 965.4 449.6 C966.5 454.5 969.4 455.7 966.5 459.5 C963.6 463.3 948.6 466.2 948.1 472.5 C947.6 478.8 965.4 483.4 963.3 497.4 C961.1 511.5 945.6 539.9 935.1 557.1 C924.6 574.2 911.3 591.0 900.4 600.4 C889.6 609.8 882.4 625.7 870.1 613.4 C857.8 601.1 848.4 552.0 826.7 526.7 C805.0 501.4 747.8 476.1 740.0 461.7 C732.2 447.2 780.0 448.9 780.0 440.0 C780.0 431.1 752.9 419.1 740.1 408.5 C727.3 397.8 714.1 386.1 703.3 375.9 C692.4 365.8 679.6 356.8 675.1 347.8 C670.6 338.7 676.0 334.0 676.2 321.7 C676.4 309.5 672.8 281.3 676.2 274.1Z" fill="#fdaef1"></path>
<path d="M681.6 291.4 C688.1 284.9 707.6 281.3 718.5 282.7 C729.3 284.2 739.8 292.1 746.6 300.1 C753.5 308.0 754.1 323.9 759.6 330.4 C765.2 336.9 776.6 329.7 780.0 339.1 C783.4 348.5 784.9 380.3 780.0 386.8 C775.2 393.3 761.2 378.1 751.0 378.1 C740.7 378.1 726.0 387.9 718.5 386.8 C710.9 385.7 710.5 377.4 705.4 371.6 C700.4 365.8 692.4 360.4 688.1 352.1 C683.8 343.8 680.5 331.9 679.4 321.7 C678.4 311.6 675.1 297.9 681.6 291.4Z" fill="#ffd5f8"></path>
<path d="M740.0 339.1 C745.4 319.9 765.3 330.4 772.5 334.8 C779.7 339.1 776.9 356.4 783.4 365.1 C789.9 373.8 801.8 382.1 811.5 386.8 C821.3 391.5 840.1 388.9 841.9 393.3 C843.7 397.6 819.1 404.8 822.4 412.8 C825.6 420.7 853.4 434.8 861.4 441.0 C869.3 447.1 890.3 448.2 870.1 449.6 C849.8 451.1 761.7 468.1 740.0 449.6 C718.3 431.2 734.6 358.2 740.0 339.1Z" fill="#ffd5f8"></path>
<path d="M740.0 440.0 C758.1 438.6 847.7 436.0 870.1 440.0 C892.5 444.0 877.3 454.5 874.4 463.8 C871.5 473.2 859.6 486.2 852.7 496.4 C845.9 506.5 839.4 524.9 833.2 524.5 C827.1 524.2 822.4 504.7 815.9 494.2 C809.4 483.7 803.2 469.3 794.2 461.7 C785.2 454.1 770.7 452.3 761.7 448.7 C752.6 445.1 721.9 441.4 740.0 440.0Z" fill="#ffd5f8"></path>
<path d="M740.0 378.1 C745.4 367.6 764.2 381.0 772.5 386.8 C780.8 392.6 786.6 402.3 789.9 412.8 C793.1 423.3 800.3 443.5 792.0 449.6 C783.7 455.8 748.7 461.6 740.0 449.6 C731.3 437.7 734.6 388.6 740.0 378.1Z" fill="#ffeefc"></path>
<path d="M761.7 440.0 C766.4 437.8 804.3 436.7 811.5 440.0 C818.8 443.3 809.7 457.3 805.0 459.5 C800.3 461.7 790.6 456.3 783.4 453.0 C776.1 449.8 757.0 442.2 761.7 440.0Z" fill="#ffeefc"></path>
<path d="M631.7 331.5 C639.3 327.5 663.2 323.0 675.1 330.4 C687.0 337.8 701.8 365.1 703.3 375.9 C704.7 386.8 688.5 390.4 683.8 395.4 C679.1 400.5 679.4 405.6 675.1 406.3 C670.8 407.0 664.3 404.5 657.8 399.8 C651.3 395.1 640.8 385.7 636.1 378.1 C631.4 370.5 630.3 362.0 629.6 354.3 C628.9 346.5 624.2 335.5 631.7 331.5Z" fill="#ffeefc"></path>
<path d="M592.7 300.1 C595.6 297.9 614.4 299.2 620.9 304.4 C627.4 309.6 630.3 323.2 631.7 331.5 C633.2 339.8 632.5 352.3 629.6 354.3 C626.7 356.2 618.7 349.6 614.4 343.4 C610.1 337.3 607.2 324.6 603.6 317.4 C600.0 310.2 589.8 302.2 592.7 300.1Z" fill="#ffd5f8"></path>
<g clip-path="url(#circ)"><path d="M549.4 431.3 C530.6 433.9 559.8 449.0 562.4 455.2 C564.9 461.3 566.4 463.5 564.5 468.2 C562.7 472.9 557.0 479.2 551.5 483.4 C546.1 487.5 537.8 489.9 532.0 493.1 C526.2 496.4 519.6 499.8 516.9 502.9 C514.1 505.9 517.6 507.6 515.8 511.5 C514.0 515.5 507.6 519.1 506.0 526.7 C504.4 534.3 504.6 549.1 506.0 557.1 C507.5 565.0 510.7 569.3 514.7 574.4 C518.7 579.5 523.7 585.2 529.9 587.4 C536.0 589.6 543.6 588.7 551.5 587.4 C559.5 586.1 572.5 577.7 577.6 579.8 C582.6 582.0 580.8 591.6 581.9 600.4 C583.0 609.3 583.7 612.7 584.1 632.9 C584.4 653.2 551.4 707.0 584.1 721.8 C616.7 736.6 707.1 721.8 780.0 721.8 C853.0 721.8 981.5 761.6 1021.8 721.8 C1062.1 682.1 1031.6 520.8 1021.8 483.4 C1012.1 446.0 975.6 499.3 963.3 497.4 C951.0 495.6 952.8 479.9 948.1 472.5 C943.4 465.1 938.0 459.1 935.1 453.0 C932.2 446.9 933.3 450.7 930.8 435.7 C928.2 420.7 926.4 374.7 919.9 362.9 C913.4 351.2 900.4 365.5 891.7 365.1 C883.1 364.7 873.0 358.6 867.9 360.8 C862.8 362.9 860.3 370.2 861.4 378.1 C862.5 386.1 871.5 396.5 874.4 408.5 C877.3 420.4 879.5 444.4 878.7 449.6 C878.0 454.9 870.8 437.6 870.1 440.0 C869.3 442.4 877.3 454.5 874.4 463.8 C871.5 473.2 859.6 486.2 852.7 496.4 C845.9 506.5 839.4 524.9 833.2 524.5 C827.1 524.2 822.4 504.7 815.9 494.2 C809.4 483.7 803.2 469.3 794.2 461.7 C785.2 454.1 770.7 452.3 761.7 448.7 C752.6 445.1 739.3 439.8 740.0 440.0 C740.7 440.2 766.1 454.5 766.1 449.6 C766.2 444.7 748.1 420.0 740.1 410.6 C732.2 401.2 723.5 397.3 718.5 393.3 C713.4 389.3 714.8 387.1 709.8 386.8 C704.7 386.4 693.5 388.2 688.1 391.1 C682.7 394.0 678.7 394.4 677.3 404.1 C675.8 413.9 679.8 443.7 679.4 449.6 C679.1 455.6 696.8 443.1 675.1 440.0 C653.4 436.9 568.2 428.8 549.4 431.3Z" fill="#4a073e"></path></g>
<path d="M529.9 408.5 C524.4 400.0 521.9 392.6 519.0 386.8 C516.1 381.0 512.3 378.8 512.5 373.8 C512.7 368.7 518.3 361.5 520.1 356.4 C521.9 351.4 520.3 347.8 523.4 343.4 C526.4 339.1 536.2 335.5 538.5 330.4 C540.9 325.4 536.4 318.1 537.4 313.1 C538.5 308.0 540.9 304.4 545.0 300.1 C549.2 295.7 556.2 288.5 562.4 287.1 C568.5 285.6 576.8 289.2 581.9 291.4 C586.9 293.6 589.5 295.0 592.7 300.1 C596.0 305.1 597.6 314.9 601.4 321.7 C605.2 328.6 611.3 335.5 615.5 341.3 C619.6 347.0 626.3 350.8 626.3 356.4 C626.3 362.0 615.8 368.4 615.5 374.9 C615.2 381.4 622.2 389.5 624.6 395.4 C627.0 401.4 629.0 404.8 629.8 410.6 C630.6 416.4 631.1 424.7 629.6 430.1 C628.1 435.6 625.6 438.1 620.9 443.1 C616.2 448.2 610.4 457.4 601.4 460.5 C592.4 463.6 575.0 465.4 566.7 461.6 C558.4 457.8 557.7 446.6 551.5 437.7 C545.4 428.9 535.3 416.9 529.9 408.5Z" fill="#4a073e"></path>
<path d="M591.6 271.9 C593.3 269.5 601.2 266.8 605.7 268.6 C610.2 270.4 615.8 278.9 618.7 282.7 C621.7 286.5 623.5 288.1 623.5 291.4 C623.5 294.6 622.4 300.8 618.7 302.2 C615.1 303.7 606.1 301.5 601.4 300.1 C596.7 298.6 591.5 296.5 590.6 293.6 C589.7 290.7 595.8 286.3 596.0 282.7 C596.2 279.1 590.0 274.2 591.6 271.9Z" fill="#632b5b"></path>
<path d="M571.0 347.8 C572.1 345.6 581.2 340.9 588.4 341.3 C595.6 341.6 608.6 347.4 614.4 349.9 C620.2 352.5 625.2 355.7 623.1 356.4 C620.9 357.2 608.3 354.6 601.4 354.3 C594.5 353.9 586.9 355.3 581.9 354.3 C576.8 353.2 570.0 349.9 571.0 347.8Z" fill="#561a4d"></path>
<path d="M618.7 395.4 C622.0 400.1 627.4 409.2 629.6 415.0 C631.7 420.7 633.6 426.9 631.7 430.1 C629.9 433.4 622.7 438.1 618.7 434.5 C614.8 430.9 609.3 416.4 607.9 408.5 C606.5 400.5 608.3 388.9 610.1 386.8 C611.9 384.6 615.5 390.8 618.7 395.4Z" fill="#632b5b"></path>
<path d="M670.8 206.9 C679.8 202.5 704.4 196.0 720.6 193.8 C736.9 191.7 760.4 193.8 768.3 193.8 C776.2 193.8 767.5 192.4 768.2 193.8 C768.9 195.3 769.3 199.3 772.5 202.5 C775.8 205.8 784.4 208.7 787.7 213.4 C790.9 218.1 789.1 225.3 792.0 230.7 C794.9 236.1 802.5 240.8 805.0 245.9 C807.6 250.9 805.0 257.8 807.2 261.0 C809.4 264.3 817.0 262.5 818.0 265.4 C819.1 268.3 816.2 274.8 813.7 278.4 C811.2 282.0 804.3 283.8 802.9 287.1 C801.4 290.3 806.5 294.3 805.0 297.9 C803.6 301.5 794.9 305.5 794.2 308.7 C793.5 312.0 801.4 313.8 800.7 317.4 C800.0 321.0 793.5 330.1 789.9 330.4 C786.2 330.8 782.6 319.9 779.0 319.6 C775.4 319.2 771.4 326.8 768.2 328.2 C764.9 329.7 761.3 330.1 759.5 328.2 C757.7 326.4 759.1 322.1 757.3 317.4 C755.5 312.7 751.6 305.1 748.7 300.1 C745.8 295.0 738.9 285.6 740.0 287.1 C741.1 288.5 755.3 308.7 755.3 308.7 C755.3 308.7 746.3 292.1 740.1 287.1 C734.0 282.0 725.3 279.8 718.5 278.4 C711.6 276.9 705.1 280.2 698.9 278.4 C692.8 276.6 686.3 271.2 681.6 267.6 C676.9 263.9 672.9 262.1 670.8 256.7 C668.6 251.3 669.3 241.2 668.6 235.0 C667.9 228.9 666.1 224.6 666.4 219.9 C666.8 215.2 661.7 211.2 670.8 206.9Z" fill="#632b5b"></path>
<path d="M707.6 269.7 C709.4 266.8 722.1 263.9 729.3 261.0 C736.5 258.2 742.5 253.1 751.0 252.4 C759.4 251.7 779.7 256.7 780.0 256.7 C780.4 256.7 752.5 252.4 753.0 252.4 C753.6 252.4 774.7 255.3 783.4 256.7 C792.0 258.2 800.0 257.4 805.0 261.0 C810.1 264.7 814.1 274.1 813.7 278.4 C813.3 282.7 804.3 283.8 802.9 287.1 C801.4 290.3 806.5 294.3 805.0 297.9 C803.6 301.5 796.7 303.3 794.2 308.7 C791.7 314.2 792.4 328.6 789.9 330.4 C787.3 332.2 782.6 319.9 779.0 319.6 C775.4 319.2 771.4 326.8 768.2 328.2 C764.9 329.7 761.3 330.1 759.5 328.2 C757.7 326.4 759.1 322.1 757.3 317.4 C755.5 312.7 751.6 305.1 748.7 300.1 C745.8 295.0 738.9 285.6 740.0 287.1 C741.1 288.5 755.3 308.7 755.3 308.7 C755.3 308.7 746.3 292.1 740.1 287.1 C734.0 282.0 723.9 281.3 718.5 278.4 C713.0 275.5 705.8 272.6 707.6 269.7Z" fill="#561a4d"></path>
<path d="M774.7 215.5 C776.9 213.4 784.8 214.8 787.7 217.7 C790.6 220.6 792.2 229.6 792.0 232.9 C791.8 236.1 789.5 237.6 786.6 237.2 C783.7 236.8 776.7 234.3 774.7 230.7 C772.7 227.1 772.5 217.7 774.7 215.5Z" fill="#561a4d"></path>
<path d="M850.6 341.3 C852.4 342.0 861.8 357.9 867.9 360.8 C874.0 363.7 883.4 357.9 887.4 358.6 C891.4 359.3 890.3 362.2 891.7 365.1 C893.2 368.0 891.7 370.5 896.1 375.9 C900.4 381.4 913.8 399.8 917.8 397.6 C921.7 395.4 918.1 369.1 919.9 362.9 C921.7 356.8 926.4 356.8 928.6 360.8 C930.8 364.7 930.4 375.9 932.9 386.8 C935.5 397.6 940.9 418.6 943.8 425.8 C946.7 433.0 950.6 426.2 950.3 430.1 C949.9 434.1 944.1 445.8 941.6 449.6 C939.1 453.5 934.0 449.2 935.1 453.0 C936.2 456.8 943.4 465.1 948.1 472.5 C952.8 479.9 965.4 483.4 963.3 497.4 C961.1 511.5 945.6 539.9 935.1 557.1 C924.6 574.2 909.8 591.7 900.4 600.4 C891.0 609.1 883.8 616.0 878.7 609.1 C873.7 602.2 870.8 576.6 870.1 559.2 C869.3 541.9 873.0 524.9 874.4 505.0 C875.8 485.2 878.7 456.1 878.7 440.0 C878.7 423.9 876.9 419.1 874.4 408.5 C871.9 397.8 863.6 381.7 863.6 375.9 C863.6 370.2 875.5 377.0 874.4 373.8 C873.3 370.5 861.0 361.8 857.1 356.4 C853.1 351.0 848.8 340.5 850.6 341.3Z" fill="#561a4d"></path>
<path d="M917.8 397.6 C917.8 383.2 918.1 369.1 919.9 362.9 C921.7 356.8 926.4 356.8 928.6 360.8 C930.8 364.7 931.8 372.0 932.9 386.8 C934.0 401.6 937.3 439.2 935.1 449.6 C932.9 460.1 922.8 458.3 919.9 449.6 C917.0 441.0 917.8 412.1 917.8 397.6Z" fill="#4a073e"></path>
<path d="M891.7 386.8 C894.3 382.4 901.1 378.8 904.8 382.4 C908.4 386.1 912.3 398.0 913.4 408.5 C914.5 418.9 914.1 438.4 911.3 445.3 C908.4 452.2 899.7 455.8 896.1 449.6 C892.5 443.5 890.3 418.9 889.6 408.5 C888.9 398.0 889.2 391.1 891.7 386.8Z" fill="#632b5b"></path>
<path d="M891.7 440.0 C895.0 434.6 910.2 432.8 913.4 440.0 C916.7 447.2 912.3 465.3 911.3 483.4 C910.2 501.4 908.5 537.2 906.9 548.4 C905.3 559.6 901.9 559.6 901.5 550.6 C901.1 541.5 906.0 507.2 904.8 494.2 C903.5 481.2 896.1 481.5 893.9 472.5 C891.7 463.5 888.5 445.4 891.7 440.0Z" fill="#fdaef1"></path>
<path d="M870.1 463.8 C871.2 459.5 875.8 457.3 876.6 461.7 C877.3 466.0 875.5 485.5 874.4 489.9 C873.3 494.2 870.8 492.0 870.1 487.7 C869.3 483.4 869.0 468.2 870.1 463.8Z" fill="#fdaef1"></path>
<path d="M889.6 600.4 C889.8 598.4 894.1 595.0 896.1 595.0 C898.1 595.0 901.7 598.4 901.5 600.4 C901.3 602.4 897.0 606.9 895.0 606.9 C893.0 606.9 889.4 602.4 889.6 600.4Z" fill="#fdaef1"></path>
<path d="M935.1 440.0 C937.1 439.3 945.6 447.6 948.1 453.0 C950.6 458.4 951.4 469.6 950.3 472.5 C949.2 475.4 944.0 472.9 941.6 470.3 C939.3 467.8 937.3 462.4 936.2 457.3 C935.1 452.3 933.1 440.7 935.1 440.0Z" fill="#ffeefc"></path>
<path d="M948.1 511.5 C947.7 509.0 952.4 502.9 954.6 502.9 C956.8 502.9 960.8 509.0 961.1 511.5 C961.5 514.1 958.9 518.0 956.8 518.0 C954.6 518.0 948.5 514.1 948.1 511.5Z" fill="#ffd5f8"></path>
<path d="M800.7 318.5 C802.1 315.2 807.9 315.8 811.5 319.6 C815.1 323.4 820.6 334.4 822.4 341.3 C824.2 348.1 823.5 357.5 822.4 360.8 C821.3 364.0 817.3 363.7 815.9 360.8 C814.4 357.9 815.1 345.6 813.7 343.4 C812.3 341.3 807.9 342.7 807.2 347.8 C806.5 352.8 809.7 368.7 809.4 373.8 C809.0 378.8 806.1 383.9 805.0 378.1 C803.9 372.3 803.6 349.0 802.9 339.1 C802.1 329.2 799.3 321.7 800.7 318.5Z" fill="#561a4d"></path>
<path d="M802.9 388.9 C804.3 387.1 808.3 387.9 811.5 388.9 C814.8 390.0 822.0 393.5 822.4 395.4 C822.7 397.4 817.0 400.1 813.7 400.9 C810.5 401.6 804.7 401.8 802.9 399.8 C801.1 397.8 801.4 390.8 802.9 388.9Z" fill="#561a4d"></path>
<path d="M825.6 425.8 C828.2 421.5 830.5 421.1 831.0 423.6 C831.6 426.2 830.3 436.6 828.9 441.0 C827.4 445.3 824.5 448.2 822.4 449.6 C820.2 451.1 815.3 453.6 815.9 449.6 C816.4 445.7 823.1 430.1 825.6 425.8Z" fill="#632b5b"></path>
<path d="M805.0 461.7 C807.9 456.6 823.5 450.8 826.7 453.0 C830.0 455.2 826.4 467.8 824.5 474.7 C822.7 481.5 818.4 492.7 815.9 494.2 C813.3 495.6 811.2 488.8 809.4 483.4 C807.6 477.9 802.1 466.7 805.0 461.7Z" fill="#632b5b"></path>
<path d="M689.2 360.8 C690.6 359.7 702.6 362.9 705.4 365.1 C708.3 367.3 708.0 372.7 706.5 373.8 C705.1 374.9 699.7 373.8 696.8 371.6 C693.9 369.4 687.7 361.8 689.2 360.8Z" fill="#561a4d"></path>
<path d="M672.9 198.2 C678.7 194.9 704.2 191.7 712.0 191.7 C719.7 191.7 722.1 196.0 719.5 198.2 C717.0 200.3 702.0 202.5 696.8 204.7 C691.5 206.9 691.4 210.1 688.1 211.2 C684.9 212.3 679.8 213.4 677.3 211.2 C674.7 209.0 667.2 201.4 672.9 198.2Z" fill="#fa4600"></path>
<path d="M659.9 237.2 C660.8 235.0 662.5 232.5 664.3 235.0 C666.1 237.6 670.8 248.8 670.8 252.4 C670.8 256.0 666.2 257.4 664.3 256.7 C662.3 256.0 659.6 251.3 658.8 248.0 C658.1 244.8 659.0 239.4 659.9 237.2Z" fill="#fa4600"></path>
<path d="M620.9 297.9 C622.4 296.1 627.0 306.6 631.7 308.7 C636.4 310.9 645.5 308.7 649.1 310.9 C652.7 313.1 649.1 319.4 653.4 321.7 C657.8 324.1 672.6 323.4 675.1 325.0 C677.6 326.6 675.8 330.4 668.6 331.5 C661.4 332.6 639.3 333.5 631.7 331.5 C624.2 329.5 624.9 325.2 623.1 319.6 C621.3 314.0 619.5 299.7 620.9 297.9Z" fill="#fa4600"></path>
<path d="M676.2 341.3 C677.1 336.9 681.8 323.6 683.8 319.6 C685.8 315.6 688.5 313.8 688.1 317.4 C687.7 321.0 683.2 336.6 681.6 341.3 C680.0 346.0 679.3 345.6 678.4 345.6 C677.4 345.6 675.3 345.6 676.2 341.3Z" fill="#fa4600"></path>
<path d="M619.8 360.8 C619.8 357.5 628.7 350.6 631.7 352.1 C634.8 353.5 638.2 366.2 638.2 369.4 C638.2 372.7 634.8 373.0 631.7 371.6 C628.7 370.2 619.8 364.0 619.8 360.8Z" fill="#fa4600"></path>
<path d="M622.0 378.1 C623.4 377.0 630.8 379.2 636.1 382.4 C641.3 385.7 647.6 394.0 653.4 397.6 C659.2 401.2 666.8 402.3 670.8 404.1 C674.7 405.9 675.5 400.9 677.3 408.5 C679.1 416.0 679.8 441.3 681.6 449.6 C683.4 458.0 702.2 456.9 688.1 458.3 C674.0 459.8 612.2 459.8 597.1 458.3 C581.9 456.9 591.3 454.3 597.1 449.6 C602.8 444.9 623.8 433.0 631.7 430.1 C639.7 427.2 644.0 435.6 644.8 432.3 C645.5 429.1 639.0 417.9 636.1 410.6 C633.2 403.4 629.8 394.4 627.4 388.9 C625.1 383.5 620.5 379.2 622.0 378.1Z" fill="#fa4600"></path>
<path d="M644.8 412.8 C646.9 411.3 655.6 419.7 659.9 423.6 C664.3 427.6 667.7 432.3 670.8 436.6 C673.8 441.0 681.2 447.5 678.4 449.6 C675.5 451.8 658.7 452.5 653.4 449.6 C648.2 446.8 648.4 438.4 646.9 432.3 C645.5 426.2 642.6 414.2 644.8 412.8Z" fill="#561a4d"></path>
<path d="M631.7 415.0 C633.0 413.9 638.1 413.9 640.4 415.0 C642.8 416.0 645.8 419.7 645.8 421.5 C645.8 423.3 642.6 425.8 640.4 425.8 C638.2 425.8 634.3 423.3 632.8 421.5 C631.4 419.7 630.5 416.0 631.7 415.0Z" fill="#fa4600"></path>
<path d="M629.6 425.8 C632.1 424.7 643.7 425.1 646.9 425.8 C650.2 426.5 651.6 429.1 649.1 430.1 C646.6 431.2 635.0 433.0 631.7 432.3 C628.5 431.6 627.0 426.9 629.6 425.8Z" fill="#fdaef1"></path>
<ellipse cx="757.0" cy="357.5" rx="5" ry="7.5" transform="rotate(25 757.0 357.5)" fill="#fa4600"></ellipse>
<path d="M811.5 319.6 C815.1 319.6 835.7 327.5 848.4 330.4 C861.0 333.3 875.8 334.4 887.4 336.9 C899.0 339.4 913.4 343.2 917.8 345.6 C922.1 347.9 919.9 351.7 913.4 351.0 C906.9 350.3 890.3 344.0 878.7 341.3 C867.2 338.5 847.7 332.2 844.1 334.8 C840.4 337.3 852.0 349.9 857.1 356.4 C862.1 362.9 873.3 370.2 874.4 373.8 C875.5 377.4 863.9 374.1 863.6 378.1 C863.2 382.1 869.7 389.7 872.2 397.6 C874.8 405.6 878.0 417.1 878.7 425.8 C879.5 434.5 877.3 447.3 876.6 449.6 C875.8 452.0 875.1 439.4 874.4 440.0 C873.7 440.6 873.7 453.0 872.2 453.0 C870.8 453.0 867.5 442.4 865.7 440.0 C863.9 437.6 865.0 441.9 861.4 438.8 C857.8 435.7 849.8 425.8 844.1 421.5 C838.3 417.1 831.4 415.3 826.7 412.8 C822.0 410.3 816.6 409.2 815.9 406.3 C815.1 403.4 818.0 398.0 822.4 395.4 C826.7 392.9 838.3 395.4 841.9 391.1 C845.5 386.8 845.1 377.4 844.1 369.4 C843.0 361.5 838.3 349.9 835.4 343.4 C832.5 336.9 830.7 334.4 826.7 330.4 C822.7 326.4 807.9 319.6 811.5 319.6Z" fill="#fa4600"></path>
<path d="M798.5 319.6 C800.3 319.9 803.6 327.9 802.9 332.6 C802.1 337.3 797.1 342.0 794.2 347.8 C791.3 353.5 787.5 368.0 785.5 367.3 C783.5 366.5 781.2 349.6 782.3 343.4 C783.4 337.3 789.3 334.4 792.0 330.4 C794.7 326.4 796.7 319.2 798.5 319.6Z" fill="#fa4600"></path>
<path d="M945.9 430.1 C948.8 428.5 957.9 428.0 958.9 430.1 C960.0 432.3 951.7 439.9 952.4 443.1 C953.2 446.4 960.9 448.0 963.3 449.6 C965.6 451.3 966.2 451.0 966.5 453.0 C966.9 455.0 967.4 460.6 965.4 461.7 C963.5 462.8 958.6 461.3 954.6 459.5 C950.6 457.7 943.8 454.1 941.6 450.8 C939.4 447.6 940.9 443.5 941.6 440.0 C942.3 436.5 943.0 431.8 945.9 430.1Z" fill="#fa4600"></path>
<path d="M789.9 440.0 C790.6 438.9 794.6 440.0 796.4 442.2 C798.2 444.3 800.7 450.7 800.7 453.0 C800.7 455.4 797.8 457.0 796.4 456.3 C794.9 455.5 793.1 451.4 792.0 448.7 C790.9 446.0 789.1 441.1 789.9 440.0Z" fill="#fa4600"></path>
<path d="M789.9 441.0 C790.6 441.0 796.0 448.2 796.4 449.6 C796.7 451.1 793.1 451.1 792.0 449.6 C790.9 448.2 789.1 441.0 789.9 441.0Z" fill="#fa4600"></path>
<path d="M575.4 461.7 C578.3 457.2 585.1 454.3 592.7 451.9 C600.3 449.6 612.2 447.4 620.9 447.6 C629.6 447.8 637.5 449.8 644.8 453.0 C652.0 456.3 656.0 461.1 664.3 467.1 C672.6 473.1 689.4 482.5 694.6 488.8 C699.8 495.1 698.0 502.6 695.7 505.0 C693.3 507.5 683.2 500.8 680.5 503.3 C677.8 505.8 681.1 517.0 679.4 520.2 C677.8 523.5 675.1 524.1 670.8 522.8 C666.4 521.5 659.9 514.3 653.4 512.6 C646.9 510.9 636.1 511.3 631.7 512.6 C627.4 514.0 630.3 521.2 627.4 520.6 C624.5 520.1 618.7 512.2 614.4 509.4 C610.1 506.6 606.8 506.5 601.4 503.9 C596.0 501.4 586.2 498.3 581.9 494.2 C577.6 490.0 576.5 484.4 575.4 479.0 C574.3 473.6 572.5 466.2 575.4 461.7Z" fill="#fdaef1"></path>
<path d="M575.8 462.8 C578.7 458.4 587.0 453.7 592.7 453.0 C598.4 452.3 607.9 455.7 610.1 458.4 C612.2 461.1 605.7 465.1 605.7 469.3 C605.7 473.4 610.8 477.8 610.1 483.4 C609.3 489.0 606.1 501.1 601.4 502.9 C596.7 504.7 586.2 498.2 581.9 494.2 C577.6 490.2 576.4 484.3 575.4 479.0 C574.4 473.8 572.9 467.1 575.8 462.8Z" fill="#ffeefc"></path>
<path d="M618.7 449.8 C623.1 448.9 637.2 450.7 644.8 453.4 C652.3 456.2 661.6 463.6 664.3 466.4 C667.0 469.3 664.3 470.1 661.0 470.8 C657.8 471.4 649.6 471.4 644.8 470.3 C639.9 469.3 636.1 466.3 631.7 464.3 C627.4 462.3 620.9 460.8 618.7 458.4 C616.6 456.0 614.4 450.6 618.7 449.8Z" fill="#ffeefc"></path>
<path d="M631.7 484.4 C631.4 480.8 641.5 474.9 646.9 472.5 C652.3 470.2 656.3 467.3 664.3 470.3 C672.2 473.4 689.7 486.5 694.6 490.9 C699.5 495.4 697.5 496.9 693.5 496.8 C689.6 496.7 676.0 491.5 670.8 490.3 C665.5 489.1 665.7 488.8 662.1 489.4 C658.5 490.1 654.1 495.0 649.1 494.2 C644.0 493.4 632.1 488.1 631.7 484.4Z" fill="#4a073e"></path>
<path d="M631.7 493.1 C634.6 496.2 645.7 501.4 653.4 505.0 C661.2 508.6 674.0 514.8 678.4 514.8 C682.7 514.8 681.8 508.0 679.4 505.0 C677.1 502.0 669.3 498.4 664.3 496.8 C659.2 495.2 653.8 497.0 649.1 495.3 C644.4 493.6 639.0 487.0 636.1 486.6 C633.2 486.2 628.9 490.0 631.7 493.1Z" fill="#4a073e"></path>
<path d="M607.9 486.6 C608.8 490.2 615.1 499.8 618.7 505.0 C622.4 510.3 627.4 516.8 629.6 518.0 C631.7 519.3 632.8 515.5 631.7 512.6 C630.7 509.7 626.1 505.6 623.1 500.7 C620.0 495.8 615.8 485.7 613.3 483.4 C610.8 481.0 607.0 483.0 607.9 486.6Z" fill="#561a4d"></path>
<path d="M631.7 513.7 C635.4 512.7 646.9 511.8 653.4 513.3 C659.9 514.8 670.8 520.2 670.8 522.8 C670.8 525.4 659.9 529.5 653.4 528.9 C646.9 528.3 635.4 521.7 631.7 519.1 C628.1 516.6 628.1 514.7 631.7 513.7Z" fill="#4a073e"></path>
<path d="M605.7 462.8 L622.0 461.0 L644.8 472.5 L668.6 486.0 L694.6 488.1" fill="none" stroke="#fa4600" stroke-width="6.5" stroke-linecap="round" stroke-linejoin="round"></path>
<path d="M627.8 490.3 L651.3 501.8 L677.9 515.2" fill="none" stroke="#fa4600" stroke-width="6.5" stroke-linecap="round" stroke-linejoin="round"></path>
<path d="M630.0 518.5 L642.6 523.5 L651.9 528.9" fill="none" stroke="#fa4600" stroke-width="6" stroke-linecap="round" stroke-linejoin="round"></path>
<path d="M642.6 449.1 L670.8 462.8 L694.6 481.2" fill="none" stroke="#fa4600" stroke-width="5.5" stroke-linecap="round" stroke-linejoin="round"></path>
<path d="M577.6 459.5 C581.2 456.4 592.4 452.1 601.4 448.7 C610.4 445.2 617.3 440.5 631.7 438.9 C646.2 437.3 677.3 434.0 688.1 438.9 C698.9 443.8 697.9 465.5 696.8 468.2 C695.7 470.9 688.8 459.1 681.6 455.2 C674.4 451.2 663.2 445.8 653.4 444.3 C643.7 442.9 632.5 445.4 623.1 446.5 C613.7 447.6 604.3 447.4 597.1 450.8 C589.8 454.3 583.0 465.7 579.7 467.1 C576.5 468.5 573.9 462.6 577.6 459.5Z" fill="#fa4600"></path>
<path d="M642.6 444.3 C639.0 440.9 646.9 441.3 653.4 443.3 C659.9 445.2 674.4 451.7 681.6 456.3 C688.8 460.8 694.2 465.8 696.8 470.3 C699.3 474.9 700.4 484.4 696.8 483.4 C693.2 482.3 684.1 470.3 675.1 463.8 C666.1 457.3 646.2 447.8 642.6 444.3Z" fill="#632b5b"></path>
<path d="M688.1 440.0 C690.3 441.8 693.9 461.0 696.8 468.2 C699.7 475.4 700.0 474.3 705.4 483.4 C710.9 492.4 721.3 510.5 729.3 522.4 C737.2 534.3 746.6 543.3 753.1 554.9 C759.6 566.5 764.7 579.8 768.3 591.7 C771.9 603.7 772.9 615.6 774.8 626.4 C776.8 637.3 780.4 651.7 780.0 656.8 C779.7 661.8 775.0 662.9 772.7 656.8 C770.3 650.6 768.3 631.5 766.1 619.9 C764.0 608.4 762.9 597.9 759.6 587.4 C756.4 576.9 753.5 569.0 746.6 557.1 C739.8 545.1 726.8 527.8 718.5 515.9 C710.1 503.9 702.6 495.3 696.8 485.5 C691.0 475.8 685.2 464.9 683.8 457.3 C682.3 449.8 685.9 438.2 688.1 440.0Z" fill="#fa4600"></path>
<path d="M696.8 485.5 C700.8 487.3 710.1 503.9 718.5 515.9 C726.8 527.8 739.8 545.1 746.6 557.1 C753.5 569.0 756.4 576.9 759.6 587.4 C762.9 597.9 765.8 612.0 766.1 619.9 C766.5 627.9 764.0 636.9 761.8 635.1 C759.6 633.3 757.5 619.9 753.1 609.1 C748.8 598.2 741.9 580.9 735.8 570.1 C729.7 559.2 722.4 549.8 716.3 544.1 C710.1 538.3 702.6 541.9 698.9 535.4 C695.3 528.9 695.0 513.3 694.6 505.0 C694.2 496.7 692.8 483.7 696.8 485.5Z" fill="#561a4d"></path>
<path d="M729.3 522.4 C731.5 521.3 747.4 544.1 753.1 554.9 C758.9 565.7 763.3 581.3 764.0 587.4 C764.7 593.6 761.5 596.1 757.5 591.7 C753.5 587.4 744.8 573.0 740.1 561.4 C735.4 549.8 727.1 523.5 729.3 522.4Z" fill="#632b5b"></path>
<path d="M659.9 531.0 C663.5 523.8 675.8 523.8 679.4 526.7 C683.0 529.6 683.0 537.6 681.6 548.4 C680.2 559.2 673.7 576.2 670.8 591.7 C667.9 607.3 666.1 634.4 664.3 641.6 C662.5 648.8 661.0 647.0 659.9 635.1 C658.8 623.2 657.8 587.4 657.8 570.1 C657.8 552.7 656.3 538.3 659.9 531.0Z" fill="#561a4d"></path>
<path d="M705.4 570.1 C705.4 567.2 713.4 586.0 718.5 591.7 C723.5 597.5 732.2 599.3 735.8 604.8 C739.4 610.2 741.9 619.9 740.1 624.3 C738.3 628.6 728.6 633.3 725.0 630.8 C721.3 628.2 721.7 619.2 718.5 609.1 C715.2 599.0 705.4 573.0 705.4 570.1Z" fill="#561a4d"></path>
<path d="M553.7 494.2 C555.0 492.4 558.8 494.2 560.2 496.4 C561.7 498.5 563.1 503.9 562.4 507.2 C561.7 510.5 557.5 515.9 555.9 515.9 C554.2 515.9 553.0 510.8 552.6 507.2 C552.3 503.6 552.4 496.0 553.7 494.2Z" fill="#632b5b"></path>
<path d="M740.0 531.0 C742.2 535.0 748.7 546.9 753.0 554.9 C757.3 562.8 762.8 569.0 766.0 578.7 C769.3 588.5 770.7 600.8 772.5 613.4 C774.3 626.1 776.1 647.7 776.9 654.6" fill="none" stroke="#fa4600" stroke-width="5.5" stroke-linecap="round"></path>
<path d="M740.0 535.4 C741.8 534.7 747.2 549.5 750.8 557.1 C754.5 564.6 759.0 571.5 761.7 580.9 C764.4 590.3 767.1 606.2 767.1 613.4 C767.1 620.6 764.0 627.9 761.7 624.3 C759.3 620.6 756.6 602.2 753.0 591.7 C749.4 581.3 742.2 570.8 740.0 561.4 C737.8 552.0 738.2 536.1 740.0 535.4Z" fill="#561a4d"></path>
<path d="M841.9 522.4 C843.3 512.6 856.7 505.4 861.4 511.5 C866.1 517.7 867.2 543.0 870.1 559.2 C873.0 575.5 880.2 600.1 878.7 609.1 C877.3 618.1 866.5 609.8 861.4 613.4 C856.3 617.0 849.8 638.0 848.4 630.8 C846.9 623.5 853.8 588.1 852.7 570.1 C851.6 552.0 840.4 532.1 841.9 522.4Z" fill="#561a4d"></path>
<path d="M861.4 559.2 C861.4 553.6 863.9 552.7 865.7 558.1 C867.5 563.6 870.1 583.3 872.2 591.7 C874.4 600.2 878.9 605.5 878.7 609.1 C878.6 612.7 873.3 616.3 871.2 613.4 C869.0 610.5 867.4 600.8 865.7 591.7 C864.1 582.7 861.4 564.8 861.4 559.2Z" fill="#fdaef1"></path>
<path d="M892.8 557.1 C892.6 553.6 894.8 551.6 896.1 554.9 C897.3 558.1 900.2 573.1 900.4 576.6 C900.6 580.0 898.4 578.7 897.2 575.5 C895.9 572.2 893.0 560.5 892.8 557.1Z" fill="#fdaef1"></path>
<ellipse cx="772.5" cy="670.9" rx="4.2" ry="14" fill="#fff"></ellipse>
<rect x="767.1" y="690.4" width="8" height="16" rx="2" fill="#fdf2fb"></rect>
</svg></div>
<div class="a" style="left:28px;top:37px;width:946px;height:973px;border:1px solid #4b7bff;border-top:none;box-sizing:border-box"></div>
<div class="a" style="left:25px;top:347px;width:6px;height:6px;background:#fff;border:1px solid #4b7bff"></div>
<div class="a" style="left:25px;top:1006px;width:6px;height:6px;background:#fff;border:1px solid #4b7bff"></div>
<div class="a" style="left:497px;top:1006px;width:6px;height:6px;background:#fff;border:1px solid #4b7bff"></div>
<div class="a" style="left:970px;top:1006px;width:6px;height:6px;background:#fff;border:1px solid #4b7bff"></div>
<div class="a" style="left:1593px;top:37px;width:20px;height:1169px;background:#535353"></div>
<svg style="left:1597px;top:1174px" width="11" height="7" viewBox="0 0 11 7"><path d="M0.7 0.7 L5.5 5.5 L10.3 0.7" fill="none" stroke="#c6c6c6" stroke-width="1.2"></path></svg>
<div class="a" style="left:1613px;top:0;width:1px;height:1206px;background:#3a3a3a"></div>
<div class="a" style="left:1614px;top:0;width:1px;height:1206px;background:#484848"></div>
<div class="a" style="left:1615px;top:0;width:1px;height:1206px;background:#3a3a3a"></div>
<div class="a" style="left:0;top:1187px;width:1613px;height:19px;background:#535353"></div>
<div class="fld" style="left:5px;top:1189px;width:85px;height:22px;border-radius:3px 3px 0 0"></div>
<div class="a" style="left:67px;top:1190px;width:22px;height:20px;background:#4d4d4d"></div>
<div class="vd" style="left:67px;top:1190px;height:20px"></div>
<span class="t w" style="left: 10px; font-size: 13px; top: 1194px;">100%</span>
<svg style="left:73.5px;top:1199px" width="10" height="6" viewBox="0 0 10 6"><path d="M0.7 0.7 L5 5 L9.3 0.7" fill="none" stroke="#e4e4e4" stroke-width="1.4"></path></svg>
<div class="fld" style="left:96px;top:1189px;width:85px;height:22px;border-radius:3px 3px 0 0"></div>
<div class="a" style="left:159px;top:1190px;width:21px;height:20px;background:#4d4d4d"></div>
<div class="vd" style="left:159px;top:1190px;height:20px"></div>
<span class="t w" style="left: 100px; font-size: 13px; top: 1194px;">0°</span>
<svg style="left:165.0px;top:1199px" width="10" height="6" viewBox="0 0 10 6"><path d="M0.7 0.7 L5 5 L9.3 0.7" fill="none" stroke="#e4e4e4" stroke-width="1.4"></path></svg>
<div class="fld" style="left:233px;top:1189px;width:73px;height:22px;border-radius:3px 3px 0 0"></div>
<div class="a" style="left:284px;top:1190px;width:21px;height:20px;background:#4d4d4d"></div>
<div class="vd" style="left:284px;top:1190px;height:20px"></div>
<span class="t w" style="left: 238px; font-size: 13px; top: 1194px;">1</span>
<svg style="left:290.0px;top:1199px" width="10" height="6" viewBox="0 0 10 6"><path d="M0.7 0.7 L5 5 L9.3 0.7" fill="none" stroke="#e4e4e4" stroke-width="1.4"></path></svg>
<svg style="left:195px;top:1196px" width="10" height="10" viewBox="0 0 10 10"><path d="M1 0V10" stroke="#6c6c6c" stroke-width="1.5"></path><path d="M9 0 L3 5 L9 10Z" fill="#6c6c6c"></path></svg>
<svg style="left:216px;top:1196px" width="8" height="10" viewBox="0 0 8 10"><path d="M7 0 L1 5 L7 10Z" fill="#6c6c6c"></path></svg>
<svg style="left:318px;top:1196px" width="8" height="10" viewBox="0 0 8 10"><path d="M1 0 L7 5 L1 10Z" fill="#6c6c6c"></path></svg>
<svg style="left:337px;top:1196px" width="10" height="10" viewBox="0 0 10 10"><path d="M9 0V10" stroke="#6c6c6c" stroke-width="1.5"></path><path d="M1 0 L7 5 L1 10Z" fill="#6c6c6c"></path></svg>
<div class="a" style="left:358px;top:1189px;width:1px;height:17px;background:#484848"></div>
<span class="t" style="left: 435px; font-size: 13px; color: rgb(216, 216, 216); letter-spacing: 0.22px; top: 1195px;">Plan de travail 1</span>
<svg style="left:617px;top:1195px" width="8" height="12" viewBox="0 0 8 12"><path d="M1 0 L7 6 L1 12Z" fill="#d6d6d6"></path></svg>
<div class="a" style="left:630px;top:1187px;width:983px;height:19px;background:#4d4d4d"></div>
<svg style="left:638px;top:1193px" width="7" height="11" viewBox="0 0 7 11"><path d="M6 0.7 L1 5.5 L6 10.3" fill="none" stroke="#c6c6c6" stroke-width="1.2"></path></svg>
<svg style="left:1579px;top:1193px" width="7" height="11" viewBox="0 0 7 11"><path d="M1 0.7 L6 5.5 L1 10.3" fill="none" stroke="#c6c6c6" stroke-width="1.2"></path></svg>
<div class="a" style="left:1108px;top:1189px;width:32px;height:20px;border-radius:9px;background:#6a6a6a"></div>
<div class="a" style="left:1593px;top:1187px;width:20px;height:19px;background:#535353"></div>
<div class="a" style="left:315px;top:1047px;width:373px;height:46px;background:#535353;border:1px solid #2f2f2f;border-radius:5px"></div>
<div class="a" style="left:325px;top:1057px;width:5px;height:25px;background:repeating-linear-gradient(180deg,#3a3a3a 0 1px,transparent 1px 2px)"></div>
<div class="a" style="left:340px;top:1052px;width:120px;height:36px;border:1px solid #6a6a6a;border-radius:3px"></div>
<div class="a" style="left:464px;top:1052px;width:102px;height:36px;border:1px solid #6a6a6a;border-radius:3px"></div>
<svg style="left:352px;top:1060px" width="20" height="20" viewBox="0 0 20 20"><path d="M9 4 H4.5 A2.5 2.5 0 0 0 2 6.5 V16 A2.5 2.5 0 0 0 4.5 18.5 H13.5 A2.5 2.5 0 0 0 16 16 V12" fill="none" stroke="#d0d0d0" stroke-width="1.6"></path><path d="M14.5 0.5 l1.4 3.6 3.6 1.4 -3.6 1.4 -1.4 3.6 -1.4 -3.6 -3.6 -1.4 3.6 -1.4z" fill="#d0d0d0"></path><path d="M8 9.5 l0.8 1.9 1.9 0.8 -1.9 0.8 -0.8 1.9 -0.8 -1.9 -1.9 -0.8 1.9 -0.8z" fill="#d0d0d0"></path></svg>
<span class="t b w" style="left: 378px; font-size: 16px; letter-spacing: -0.52px; top: 1062.5px;">Recolorer</span>
<span class="t b w" style="left: 481px; font-size: 16px; letter-spacing: -0.56px; top: 1062.5px;">Dissocier</span>
<svg style="left:577px;top:1061px" width="19" height="18" viewBox="0 0 19 18"><path d="M0.5 0.5 H11 V4.5 H4.5 V11 H0.5 Z" fill="#c6c6c6"></path><rect x="6" y="6" width="12" height="11.5" fill="#c6c6c6"></rect><path d="M12 8.5 V15 M8.7 11.75 H15.3" stroke="#535353" stroke-width="1.5"></path></svg>
<svg style="left:616px;top:1060px" width="16" height="19" viewBox="0 0 16 19"><path d="M3.5 9 V5.5 A4.5 4.5 0 0 1 12.500 5.5 V9" fill="none" stroke="#c6c6c6" stroke-width="2.2"></path><rect x="0.5" y="8.5" width="15" height="10" rx="1.2" fill="#c6c6c6"></rect><circle cx="8" cy="12.5" r="1.5" fill="#535353"></circle><rect x="7.3" y="12.5" width="1.4" height="3.5" fill="#535353"></rect></svg>
<svg style="left:651px;top:1068px" width="21" height="5" viewBox="0 0 21 5"><circle cx="2.5" cy="2.5" r="2.3" fill="#d0d0d0"></circle><circle cx="10.5" cy="2.5" r="2.3" fill="#d0d0d0"></circle><circle cx="18.500" cy="2.5" r="2.3" fill="#d0d0d0"></circle></svg>
</div>
<div class="a" id="mid" style="left:1837px;top:86px;width:272px;height:1206px;background:#535353">
<div class="a" style="left:0;top:0;width:272px;height:15px;background:#424242"></div>
<div class="a" style="left:0;top:15px;width:219px;height:1191px;background:#535353;border-top:1px solid #5a5a5a"></div>
<div class="a" style="left:219px;top:15px;width:1px;height:1191px;background:#3a3a3a"></div>
<div class="a" style="left:220px;top:15px;width:1px;height:1191px;background:#484848"></div>
<div class="a" style="left:221px;top:15px;width:1px;height:1191px;background:#3a3a3a"></div>
<div class="a" style="left:222px;top:15px;width:47px;height:1191px;background:#535353;border-top:1px solid #5a5a5a"></div>
<div class="a" style="left:269px;top:15px;width:1px;height:1191px;background:#3a3a3a"></div>
<div class="a" style="left:270px;top:15px;width:1px;height:1191px;background:#484848"></div>
<div class="a" style="left:271px;top:15px;width:1px;height:1191px;background:#3a3a3a"></div>
<svg style="left:204px;top:4px" width="8" height="6" viewBox="0 0 8 6"><path d="M3 0.5 L0.5 3 L3 5.5 M7 0.5 L4.5 3 L7 5.500" fill="none" stroke="#c0c0c0" stroke-width="1"></path></svg>
<svg style="left:254px;top:4px" width="8" height="6" viewBox="0 0 8 6"><path d="M3 0.5 L0.5 3 L3 5.5 M7 0.5 L4.5 3 L7 5.500" fill="none" stroke="#c0c0c0" stroke-width="1"></path></svg>
<div class="grip" style="left:96px;top:19px"></div>
<div class="grip" style="left:233px;top:19px"></div>
</div>
<div class="a" id="right" style="left:2109px;top:86px;width:334px;height:1206px;background:#535353;overflow:hidden">
<div class="a" style="left:0;top:0;width:334px;height:15px;background:#424242"></div>
<svg style="left:317px;top:4px" width="8" height="6" viewBox="0 0 8 6"><path d="M0.5 0.5 L3 3 L0.5 5.5 M4.5 0.5 L7 3 L4.5 5.5" fill="none" stroke="#c0c0c0" stroke-width="1"></path></svg>
<div class="a" style="left:333px;top:15px;width:1px;height:1191px;background:#3d3d3d"></div>
<div class="a" style="left:0;top:15px;width:333px;height:33px;background:#424242"></div>
<div class="a" style="left:0px;top:15px;width:79px;height:34px;background:#535353"></div>
<span class="t b" style="left: 19px; font-size: 14px; color: rgb(244, 244, 244); letter-spacing: -0.41px; top: 24.4px;">Couleur</span>
<div class="a" style="left:224px;top:15px;width:1px;height:33px;background:#383838"></div>
<span class="t b" style="left: 90px; font-size: 14px; color: rgb(180, 180, 180); letter-spacing: -0.41px; top: 24.4px;">Guide des couleurs</span>
<svg style="left:312px;top:28px" width="13" height="9" viewBox="0 0 13 9"><path d="M0 1H13 M0 4.5H13 M0 8H13" stroke="#c0c0c0" stroke-width="1.3"></path></svg>
<svg style="left:6px;top:27px" width="6" height="10" viewBox="0 0 6 10"><path d="M0.700 3.500 L3 1 L5.300 3.500 M0.700 6.500 L3 9 L5.300 6.500" fill="none" stroke="#9a9a9a" stroke-width="1"></path></svg>
<span class="t" style="left: 65px; font-size: 14px; color: rgb(208, 208, 208); top: 65.1px;">C</span>
<div class="a" style="left:88px;top:69px;width:141px;height:7px;border:1px solid #5e5e5e;background:#505050"></div>
<div class="fld" style="left:238px;top:59px;width:44px;height:25px;background:#484848"></div>
<span class="t" style="left: 285px; font-size: 12px; color: rgb(216, 216, 216); top: 66.8px;">%</span>
<span class="t" style="left: 65px; font-size: 14px; color: rgb(208, 208, 208); top: 96.1px;">M</span>
<div class="a" style="left:88px;top:100px;width:141px;height:7px;border:1px solid #5e5e5e;background:#505050"></div>
<div class="fld" style="left:238px;top:91px;width:44px;height:25px;background:#484848"></div>
<span class="t" style="left: 285px; font-size: 12px; color: rgb(216, 216, 216); top: 97.8px;">%</span>
<span class="t" style="left: 65px; font-size: 14px; color: rgb(208, 208, 208); top: 128.1px;">J</span>
<div class="a" style="left:88px;top:131.5px;width:141px;height:7px;border:1px solid #5e5e5e;background:#505050"></div>
<div class="fld" style="left:238px;top:122px;width:44px;height:25px;background:#484848"></div>
<span class="t" style="left: 285px; font-size: 12px; color: rgb(216, 216, 216); top: 129.8px;">%</span>
<span class="t" style="left: 65px; font-size: 14px; color: rgb(208, 208, 208); top: 159.1px;">N</span>
<div class="a" style="left:88px;top:162.5px;width:141px;height:7px;border:1px solid #5e5e5e;background:#505050"></div>
<div class="fld" style="left:238px;top:153.5px;width:44px;height:25px;background:#484848"></div>
<span class="t" style="left: 285px; font-size: 12px; color: rgb(216, 216, 216); top: 160.8px;">%</span>
<span class="t" style="left: 215px; font-size: 13px; color: rgb(224, 224, 224); border-bottom: 1px dashed rgb(208, 208, 208); top: 194px;">#</span>
<div class="fld" style="left:231px;top:188.5px;width:81px;height:24px;background:#484848"></div>
<div class="a" style="left:3px;top:222px;width:307px;height:26.500px;border:1px solid #484848;border-top-color:#3a3a3a;background:linear-gradient(180deg,rgba(255,255,255,.92) 0%,rgba(255,255,255,.5) 16%,rgba(255,255,255,0) 46%,rgba(0,0,0,0) 68%,rgba(0,0,0,.75) 86%,rgba(0,0,0,.95) 100%),linear-gradient(90deg,#e8101a 0%,#f08a1a 9%,#f5e61e 16%,#b8d020 23%,#5fb830 33%,#20a050 43%,#30b8c8 51%,#38a0e8 55%,#2060b0 63%,#3040a0 70%,#7040a0 78%,#c040a0 86%,#e8108a 92%,#e8101a 100%)"></div>
<div class="a" style="left:19.5px;top:91.5px;width:24px;height:24px;border:1px solid #2e2e2e;background:#535353"></div>
<div class="a" style="left:25.5px;top:97px;width:12px;height:12px;border:1px solid #2e2e2e;background:#535353"></div>
<span class="t" style="left: 38.5px; font-size: 8px; color: rgb(232, 232, 232); top: 93.9px;">?</span>
<span class="t" style="left: 21.5px; font-size: 8px; color: rgb(232, 232, 232); top: 107.5px;">?</span>
<span class="t" style="left: 38.5px; font-size: 8px; color: rgb(232, 232, 232); top: 107.5px;">?</span>
<div class="a" style="left:5px;top:79px;width:25.5px;height:24.5px;border:1px solid #2e2e2e;background:#535353"></div>
<span class="t b" style="left: 13.5px; font-size: 17px; color: rgb(240, 240, 240); top: 83.1px;">?</span>
<svg style="left:32px;top:58px" width="14" height="14" viewBox="0 0 14 14"><path d="M2.5 6.5 C2.5 3 7 2.5 9.5 4.5 C11.5 6 11.5 9 11 11" fill="none" stroke="#6c6c6c" stroke-width="1.800"></path><path d="M0 5 L3 1 L6 5.5 Z M8 10 L14 10 L11 14 Z" fill="#6c6c6c"></path></svg>
<svg style="left:9.5px;top:58.5px" width="12" height="12" viewBox="0 0 12 12"><rect x="3.500" y="3.5" width="8" height="8" fill="#111" stroke="#e8e8e8"></rect><rect x="0.5" y="0.5" width="7" height="7" fill="#fff" stroke="#111"></rect></svg>
<svg style="left:15px;top:165px" width="13" height="14" viewBox="0 0 13 14"><path d="M6 0 L0.5 6 H4 V12.5 H12.5 V9.5 H8 V6 H11.5 Z" fill="#c6c6c6"></path></svg>
<div class="a" style="left:38px;top:164.5px;width:16px;height:16px;border:1px solid #e8e8e8;background:#45133f"></div>
<svg style="left:7px;top:193px" width="48" height="15" viewBox="0 0 48 15"><rect x="0" y="0" width="16" height="15" fill="#e8e8e8"></rect><path d="M0 15 L16 0" stroke="#e01818" stroke-width="2"></path><rect x="16" y="0" width="16" height="15" fill="#000"></rect><rect x="32" y="0" width="16" height="15" fill="#fff"></rect></svg>
<div class="a" style="left:0;top:258px;width:333px;height:4px;background:#3e3e3e"></div>
<div class="a" style="left:0;top:262px;width:333px;height:32px;background:#424242"></div>
<div class="a" style="left:0px;top:262px;width:79px;height:33px;background:#535353"></div>
<span class="t b" style="left: 10px; font-size: 14px; color: rgb(244, 244, 244); letter-spacing: -0.24px; top: 270.1px;">Nuancier</span>
<div class="a" style="left:162px;top:262px;width:1px;height:32px;background:#383838"></div>
<span class="t b" style="left: 90px; font-size: 14px; color: rgb(180, 180, 180); letter-spacing: -0.64px; top: 270.1px;">Symboles</span>
<svg style="left:312px;top:274px" width="13" height="9" viewBox="0 0 13 9"><path d="M0 1H13 M0 4.5H13 M0 8H13" stroke="#c0c0c0" stroke-width="1.3"></path></svg>
<div class="a" style="left:19.5px;top:314.5px;width:24px;height:24px;border:1px solid #2e2e2e;background:#535353"></div>
<div class="a" style="left:25.5px;top:320px;width:12px;height:12px;border:1px solid #2e2e2e;background:#535353"></div>
<span class="t" style="left: 38.5px; font-size: 8px; color: rgb(232, 232, 232); top: 316.9px;">?</span>
<span class="t" style="left: 21.5px; font-size: 8px; color: rgb(232, 232, 232); top: 330.5px;">?</span>
<span class="t" style="left: 38.5px; font-size: 8px; color: rgb(232, 232, 232); top: 330.5px;">?</span>
<div class="a" style="left:5px;top:302px;width:25.5px;height:24.5px;border:1px solid #2e2e2e;background:#535353"></div>
<span class="t b" style="left: 13.5px; font-size: 17px; color: rgb(240, 240, 240); top: 306.1px;">?</span>
<div class="a" style="left:265px;top:303px;width:61px;height:29px;border:1px solid #5e5e5e"></div>
<div class="a" style="left:296px;top:303px;width:30px;height:29px;background:#2b2b2b"></div>
<svg style="left:273px;top:309px" width="15" height="17" viewBox="0 0 15 17"><path d="M0 1.500H15 M0 6.5H15 M0 11.5H15 M0 16H15" stroke="#c6c6c6" stroke-width="2"></path></svg>
<svg style="left:302px;top:309px" width="18" height="18" viewBox="0 0 18 18"><g fill="#f4f4f4"><rect x="0" y="0" width="5" height="5"></rect><rect x="6.5" y="0" width="5" height="5"></rect><rect x="13" y="0" width="5" height="5"></rect><rect x="0" y="6.5" width="5" height="5"></rect><rect x="6.5" y="6.5" width="5" height="5"></rect><rect x="13" y="6.5" width="5" height="5"></rect><rect x="0" y="13" width="5" height="5"></rect><rect x="6.500" y="13" width="5" height="5"></rect><rect x="13" y="13" width="5" height="5"></rect></g></svg>
<div class="a" style="left:4px;top:346px;width:322px;height:456px;border:1px solid #5c5c5c"></div>
<svg style="left:311px;top:352px" width="10" height="6" viewBox="0 0 10 6"><path d="M0.7 5 L5 0.7 L9.3 5" fill="none" stroke="#5c5c5c" stroke-width="1.2"></path></svg>
<svg style="left:311px;top:789px" width="10" height="6" viewBox="0 0 10 6"><path d="M0.7 0.7 L5 5 L9.3 0.7" fill="none" stroke="#5c5c5c" stroke-width="1.2"></path></svg>
<svg style="left:7px;top:348.5px" width="36" height="17" viewBox="0 0 36 17"><rect x="0" y="0" width="16" height="16" fill="#e8e8e8"></rect><path d="M0 16 L16 0" stroke="#e01818" stroke-width="2"></path><rect x="18" y="0" width="16" height="16" fill="#e0e0e0"></rect><circle cx="26" cy="8" r="4.500" fill="none" stroke="#555" stroke-width="1"></circle><path d="M18.5 8H33.5 M26 0.5V15.5" stroke="#555" stroke-width="1"></path></svg>
<svg style="left:9px;top:371px" width="14" height="11" viewBox="0 0 14 11"><path d="M0 1 H5 L6.5 2.500 H14 V11 H0 Z" fill="#a0a0a0"></path></svg>
<svg style="left:25px;top:368.5px" width="15" height="15" viewBox="0 0 15 15"><rect width="15" height="15" fill="#4a073e"></rect></svg>
<svg style="left:43px;top:368.5px" width="15" height="15" viewBox="0 0 15 15"><rect width="15" height="15" fill="#f9a6ee"></rect><path d="M15 7 V15 H7 Z" fill="#fff" stroke="#000" stroke-width="0.8"></path></svg>
<svg style="left:60.5px;top:368.5px" width="15" height="15" viewBox="0 0 15 15"><rect width="15" height="15" fill="#cc1d85"></rect><path d="M15 7 V15 H7 Z" fill="#fff" stroke="#000" stroke-width="0.8"></path></svg>
<svg style="left:78px;top:368.5px" width="15" height="15" viewBox="0 0 15 15"><rect width="15" height="15" fill="#fa4600"></rect><path d="M15 7 V15 H7 Z" fill="#fff" stroke="#000" stroke-width="0.8"></path></svg>
<svg style="left:95px;top:368.5px" width="15" height="15" viewBox="0 0 15 15"><rect width="15" height="15" fill="#5a6400"></rect><path d="M15 7 V15 H7 Z" fill="#fff" stroke="#000" stroke-width="0.8"></path></svg>
<svg style="left:13px;top:806px" width="20" height="15" viewBox="0 0 20 15"><path d="M1.5 1V13 M5 1V13 M8.5 1V13" stroke="#c6c6c6" stroke-width="2"></path><path d="M11 2 L15 13" stroke="#c6c6c6" stroke-width="1.800"></path><path d="M16 12 h3.500 l-1.750 2.500z" fill="#c6c6c6"></path></svg>
<svg style="left:46px;top:805px" width="17" height="16" viewBox="0 0 17 16"><rect x="4.500" y="0.5" width="12" height="12" fill="none" stroke="#6a6a6a"></rect><path d="M0 4 H7 V13 M4 10 L7 13.500 L10 10" fill="none" stroke="#6a6a6a" stroke-width="1.500"></path></svg>
<svg style="left:153px;top:806px" width="20" height="15" viewBox="0 0 20 15"><g fill="#c6c6c6"><rect x="0" y="0" width="3.500" height="3.5"></rect><rect x="4.500" y="0" width="3.5" height="3.5"></rect><rect x="9" y="0" width="3.500" height="3.5"></rect><rect x="0" y="4.500" width="3.5" height="3.5"></rect><rect x="9" y="4.500" width="3.5" height="3.5"></rect><rect x="0" y="9" width="3.500" height="3.5"></rect><rect x="4.500" y="9" width="3.5" height="3.5"></rect></g><path d="M15 11 h4 l-2 3z" fill="#c6c6c6"></path></svg>
<svg style="left:186px;top:807px" width="14" height="13" viewBox="0 0 14 13"><rect x="0.500" y="0.5" width="13" height="12" fill="none" stroke="#6a6a6a"></rect><path d="M0.5 3.500H13.500 M3 6.500H4.500 M6 6.500H11.500 M3 9.500H4.500 M6 9.500H11.500" stroke="#6a6a6a"></path></svg>
<svg style="left:217px;top:807px" width="17" height="13" viewBox="0 0 17 13"><path d="M0 1.500 H6 L7.500 3 H17 V13 H0 Z" fill="#c6c6c6"></path></svg>
<svg style="left:253px;top:807px" width="14" height="14" viewBox="0 0 14 14"><rect x="0.500" y="0.5" width="13" height="13" fill="none" stroke="#6a6a6a"></rect><path d="M7 3.500V10.500 M3.500 7H10.500" stroke="#6a6a6a" stroke-width="1.200"></path></svg>
<svg style="left:285px;top:806px" width="13" height="15" viewBox="0 0 13 15"><path d="M0 3H13 M4.500 3 V1 H8.500 V3" fill="none" stroke="#6a6a6a" stroke-width="1.200"></path><path d="M1.500 3.500 V14.500 H11.500 V3.500" fill="none" stroke="#6a6a6a" stroke-width="1.200"></path><path d="M4.500 5.500V12.500 M6.500 5.500V12.500 M8.500 5.500V12.500" stroke="#6a6a6a"></path></svg>
<div class="a" style="left:0;top:826px;width:333px;height:4px;background:#3e3e3e"></div>
<div class="a" style="left:0;top:830px;width:333px;height:33px;background:#424242"></div>
<div class="a" style="left:0px;top:830px;width:117px;height:34px;background:#535353"></div>
<span class="t b" style="left: 19px; font-size: 14px; color: rgb(244, 244, 244); letter-spacing: -0.34px; top: 839.1px;">Transparence</span>
<svg style="left:6px;top:841px" width="6" height="10" viewBox="0 0 6 10"><path d="M0.700 3.500 L3 1 L5.300 3.500 M0.700 6.500 L3 9 L5.300 6.500" fill="none" stroke="#9a9a9a" stroke-width="1"></path></svg>
<svg style="left:312px;top:843px" width="13" height="9" viewBox="0 0 13 9"><path d="M0 1H13 M0 4.5H13 M0 8H13" stroke="#c0c0c0" stroke-width="1.3"></path></svg>
<div class="fld" style="left:7px;top:872px;width:156px;height:25px;background:#4e4e4e"></div>
<span class="t w" style="left: 15px; font-size: 13.5px; letter-spacing: -0.15px; top: 878.1px;">Normale</span>
<svg style="left:147px;top:881px" width="10" height="6" viewBox="0 0 10 6"><path d="M0.7 0.7 L5 5 L9.3 0.7" fill="none" stroke="#e4e4e4" stroke-width="1.4"></path></svg>
<span class="t" style="left: 171px; font-size: 13.5px; color: rgb(216, 216, 216); letter-spacing: -0.11px; top: 878.1px;">Opacité :</span>
<div class="fld" style="left:229px;top:872px;width:96px;height:25px"></div>
<div class="a" style="left:304px;top:873px;width:20px;height:23px;background:#4d4d4d;border-radius:0 2px 2px 0"></div>
<div class="vd" style="left:303px;top:873px;height:23px"></div>
<span class="t w" style="left: 235px; font-size: 13px; letter-spacing: -0.56px; top: 878px;">100%</span>
<svg style="left:310px;top:879px" width="6" height="10" viewBox="0 0 6 10"><path d="M0.7 0.7 L5 5 L0.7 9.3" fill="none" stroke="#e4e4e4" stroke-width="1.4"></path></svg>
<div class="a" style="left:7px;top:905px;width:318px;height:1px;background:#484848"></div>
<div class="a" style="left:7px;top:915px;width:169px;height:69px;background:#4f4f4f;border:1px solid #5a5a5a"></div>
<div class="a" style="left:10px;top:918px;width:63px;height:64px;background:#fff;border:1px solid #000;border-bottom-width:2px"></div>
<svg style="left:30px;top:938px" width="24" height="24" viewBox="0 0 24 24"><ellipse cx="13" cy="17" rx="9" ry="5" fill="#e6dcdc"></ellipse><path d="M3 10 C3 5 8 4 10 7 L12 3 C15 1 19 3 18 7 C22 9 22 15 19 18 C15 21 8 21 5 18 C3 16 2.500 13 3 10Z" fill="#2a1414"></path><path d="M10 4 C12 1.500 16 1.500 17 4 C15 4.500 13 6 12 8Z" fill="#3a1a10"></path><path d="M9 9 C11 7 14 7 15 9 C17 10 19 12 18 14 C15 13 11 14 9 12Z" fill="#e8432a"></path><path d="M11 8 L14 7 L15 10 L12 11Z" fill="#f4d8c8"></path><path d="M5 14 C8 12 10 13 11 15" stroke="#f0c8b8" stroke-width="1.500" fill="none"></path></svg>
<div class="a" style="left:109px;top:919px;width:63px;height:63px;border:1px solid #8a8a8a;background:#535353"></div>
<svg style="left:124px;top:934px" width="32" height="32" viewBox="0 0 32 32"><circle cx="16" cy="16" r="13" fill="none" stroke="#8e8e8e" stroke-width="3"></circle><path d="M7 7 L25 25" stroke="#8e8e8e" stroke-width="3"></path></svg>
<div class="a" style="left:180.5px;top:912.5px;width:126px;height:25px;border:1px solid #6e6e6e;border-radius:3px"></div>
<span class="t b w" style="left: 200.5px; font-size: 13.5px; letter-spacing: -0.5px; top: 918.1px;">Créer masque</span>
<div class="a" style="left:181.5px;top:946px;width:14px;height:14px;border:1px solid #6a6a6a;border-radius:2px;background:#4e4e4e"></div>
<span class="t" style="left: 202px; font-size: 13.5px; color: rgb(140, 140, 140); letter-spacing: -0.22px; top: 946.6px;">Ecrêter</span>
<div class="a" style="left:181.5px;top:970.5px;width:14px;height:14px;border:1px solid #6a6a6a;border-radius:2px;background:#4e4e4e"></div>
<span class="t" style="left: 202px; font-size: 13.5px; color: rgb(140, 140, 140); letter-spacing: -0.18px; top: 971.6px;">Inversé</span>
<div class="a" style="left:0;top:993px;width:333px;height:4px;background:#3e3e3e"></div>
<div class="a" style="left:0;top:997px;width:333px;height:34px;background:#424242"></div>
<div class="a" style="left:0px;top:997px;width:120px;height:35px;background:#535353"></div>
<span class="t b" style="left: 11px; font-size: 14px; color: rgb(244, 244, 244); letter-spacing: -0.23px; top: 1006.1px;">Plans de travail</span>
<svg style="left:312px;top:1009.5px" width="13" height="9" viewBox="0 0 13 9"><path d="M0 1H13 M0 4.5H13 M0 8H13" stroke="#c0c0c0" stroke-width="1.3"></path></svg>
<div class="a" style="left:0;top:1031px;width:333px;height:5px;background:#3e3e3e"></div>
<div class="a" style="left:0;top:1036px;width:333px;height:33px;background:#424242"></div>
<div class="a" style="left:0px;top:1036px;width:88px;height:34px;background:#535353"></div>
<span class="t b" style="left: 11px; font-size: 14px; color: rgb(244, 244, 244); letter-spacing: -0.32px; top: 1044.6px;">Pathfinder</span>
<div class="a" style="left:197px;top:1036px;width:1px;height:33px;background:#383838"></div>
<span class="t b" style="left: 99px; font-size: 14px; color: rgb(180, 180, 180); letter-spacing: 0.15px; top: 1044.6px;">Transformation</span>
<div class="a" style="left:284px;top:1036px;width:1px;height:33px;background:#383838"></div>
<span class="t b" style="left: 208px; font-size: 14px; color: rgb(180, 180, 180); letter-spacing: -0.32px; top: 1044.6px;">Alignement</span>
<div class="a" style="left:197px;top:1036px;width:10px;height:33px;background:#424242;border-left:1px solid #383838"></div>
<svg style="left:312px;top:1048.5px" width="13" height="9" viewBox="0 0 13 9"><path d="M0 1H13 M0 4.5H13 M0 8H13" stroke="#c0c0c0" stroke-width="1.3"></path></svg>
<span class="t" style="left: 6px; font-size: 14px; color: rgb(212, 212, 212); letter-spacing: -0.2px; top: 1079.6px;">Modes de la forme :</span>
<svg style="left:14px;top:1109.5px" width="18" height="18" viewBox="0 0 18 18"><rect x="0.75" y="0.75" width="11" height="11" fill="#c6c6c6" stroke="#c6c6c6" stroke-width="1.500"></rect><rect x="6.250" y="6.25" width="11" height="11" fill="#c6c6c6" stroke="#c6c6c6" stroke-width="1.500"></rect></svg>
<svg style="left:59px;top:1109.5px" width="18" height="18" viewBox="0 0 18 18"><rect x="0.75" y="0.75" width="11" height="11" fill="#c6c6c6" stroke="#c6c6c6" stroke-width="1.500"></rect><rect x="6.250" y="6.25" width="11" height="11" fill="#535353" stroke="#c6c6c6" stroke-width="1.500"></rect></svg>
<svg style="left:104px;top:1109.5px" width="18" height="18" viewBox="0 0 18 18"><rect x="0.75" y="0.75" width="11" height="11" fill="none" stroke="#c6c6c6" stroke-width="1.500"></rect><rect x="6.250" y="6.25" width="11" height="11" fill="none" stroke="#c6c6c6" stroke-width="1.500"></rect><rect x="6.250" y="6.25" width="5.500" height="5.5" fill="#c6c6c6"></rect></svg>
<svg style="left:149px;top:1109.5px" width="18" height="18" viewBox="0 0 18 18"><rect x="0.75" y="0.75" width="11" height="11" fill="#c6c6c6" stroke="#c6c6c6" stroke-width="1.500"></rect><rect x="6.250" y="6.25" width="11" height="11" fill="#c6c6c6" stroke="#c6c6c6" stroke-width="1.500"></rect><rect x="7.500" y="7.5" width="3.500" height="3.5" fill="#535353"></rect></svg>
<div class="a" style="left:186px;top:1106px;width:108px;height:24px;background:#5b5b5b;border-radius:3px"></div>
<span class="t" style="left: 201.5px; font-size: 13.5px; color: rgb(138, 138, 138); letter-spacing: 0.05px; top: 1111.1px;">Décomposer</span>
<span class="t" style="left: 6px; font-size: 14px; color: rgb(212, 212, 212); letter-spacing: -0.2px; top: 1143.1px;">Pathfinders :</span>
<svg style="left:19px;top:1173.5px" width="18" height="18" viewBox="0 0 18 18"><rect x="0.75" y="0.75" width="11" height="11" fill="none" stroke="#c6c6c6" stroke-width="1.500"></rect><rect x="6.250" y="6.25" width="11" height="11" fill="none" stroke="#c6c6c6" stroke-width="1.500"></rect><rect x="3.500" y="3.500" width="11" height="11" fill="none" stroke="#c6c6c6" stroke-width="1.200"></rect></svg>
<svg style="left:67.5px;top:1173.5px" width="18" height="18" viewBox="0 0 18 18"><rect x="6.250" y="6.25" width="11" height="11" fill="#c6c6c6" stroke="#c6c6c6" stroke-width="1.500"></rect><rect x="0.75" y="0.75" width="11" height="11" fill="#535353" stroke="#c6c6c6" stroke-width="1.500"></rect></svg>
<svg style="left:116px;top:1173.5px" width="18" height="18" viewBox="0 0 18 18"><rect x="6.250" y="6.25" width="11" height="11" fill="#c6c6c6" stroke="#c6c6c6" stroke-width="1.500"></rect><rect x="0.75" y="0.75" width="11" height="11" fill="#c6c6c6" stroke="#c6c6c6" stroke-width="1.500"></rect></svg>
<svg style="left:165.5px;top:1173.5px" width="18" height="18" viewBox="0 0 18 18"><rect x="0.75" y="0.75" width="11" height="11" fill="none" stroke="#c6c6c6" stroke-width="1.500"></rect><rect x="6.250" y="6.25" width="11" height="11" fill="none" stroke="#c6c6c6" stroke-width="1.500"></rect><rect x="8" y="8" width="5" height="5" fill="#c6c6c6"></rect></svg>
<svg style="left:214px;top:1173.5px" width="18" height="18" viewBox="0 0 18 18"><rect x="0.75" y="0.75" width="11" height="11" fill="none" stroke="#c6c6c6" stroke-width="1.500"></rect><rect x="6.250" y="6.25" width="11" height="11" fill="none" stroke="#c6c6c6" stroke-width="1.500"></rect><rect x="6.250" y="6.25" width="5.500" height="5.5" fill="none" stroke="#c6c6c6" stroke-width="1.200"></rect><rect x="8" y="8" width="2" height="2" fill="#c6c6c6"></rect></svg>
<svg style="left:262.5px;top:1173.5px" width="18" height="18" viewBox="0 0 18 18"><rect x="6.250" y="6.25" width="11" height="11" fill="#c6c6c6" stroke="#c6c6c6" stroke-width="1.500"></rect><rect x="0.75" y="0.75" width="11" height="11" fill="#535353" stroke="#c6c6c6" stroke-width="1.500"></rect></svg>
</div>
<div class="a" id="tools" style="left:57px;top:567px;width:90px;height:678px">
<div class="a" style="left:1px;top:0;width:88px;height:677.500px;background:#535353;border-radius:5px 5px 0 0;box-shadow:0 0 0 1px #3d3d3d,0 2px 6px rgba(0,0,0,.35)"></div>
<div class="a" style="left:1px;top:0;width:88px;height:16px;background:#424242;border-radius:5px 5px 0 0"></div>
<svg style="left:7px;top:4px" width="9" height="9" viewBox="0 0 9 9"><path d="M0.5 0.5 L8.5 8.5 M8.5 0.5 L0.5 8.5" stroke="#d6d6d6" stroke-width="1.1"></path></svg>
<svg style="left:73px;top:5px" width="8" height="6" viewBox="0 0 8 6"><path d="M3 0.5 L0.5 3 L3 5.5 M7 0.5 L4.5 3 L7 5.5" fill="none" stroke="#c0c0c0" stroke-width="1"></path></svg>
<div class="grip" style="left:32px;top:21px"></div>
<div class="a" style="left:9px;top:42px;width:34px;height:27px;background:#2b2b2b;border-radius:2px"></div>
<svg style="left:14.5px;top:43.5px" width="30" height="26" viewBox="0 0 30 26"><path d="M5.5 2 V22.5 L10.7 17.6 L20.3 17 Z" fill="none" stroke="#d8d8d8" stroke-width="1.3" stroke-linejoin="miter"></path></svg>
<svg style="left:52px;top:43.5px" width="30" height="26" viewBox="0 0 30 26"><path d="M5 2 V22.5 L9.7 18 L19.7 17 Z" fill="#c6c6c6"></path><path d="M28 20 V24.5 H23.5 Z" fill="#c6c6c6"></path></svg>
<svg style="left:14.5px;top:73.5px" width="30" height="26" viewBox="0 0 30 26"><path d="M3.3 21.7 L15.8 9.6" stroke="#c6c6c6" stroke-width="2.2"></path><path d="M8.5 3.5 l1 2.5 2.5 1 -2.5 1 -1 2.5 -1 -2.5 -2.5 -1 2.5 -1z M18.4 2 l0.9 2.1 2.1 0.9 -2.1 0.9 -0.9 2.1 -0.9 -2.1 -2.1 -0.9 2.1 -0.9z M19.5 10 l0.8 1.7 1.7 0.8 -1.7 0.8 -0.8 1.7 -0.8 -1.7 -1.7 -0.8 1.7 -0.8z" fill="#c6c6c6"></path></svg>
<svg style="left:52px;top:73.5px" width="30" height="26" viewBox="0 0 30 26"><path d="M11 14.5 C5 15 1.5 12.5 1.5 9 C1.5 5 6 2.5 11 2.5 C16.5 2.5 20.5 5 20.5 9 C20.5 10 20.3 10.8 20 11.5" fill="none" stroke="#c6c6c6" stroke-width="1.3"></path><circle cx="6.5" cy="13.5" r="1.8" fill="none" stroke="#c6c6c6" stroke-width="1.2"></circle><path d="M7.5 15 C8.5 17 8 19.5 6 20.5" fill="none" stroke="#c6c6c6" stroke-width="1.2"></path><path d="M11.5 6.5 V22.5 L15.5 18.5 L23.5 18 Z" fill="#c6c6c6"></path></svg>
<svg style="left:14.5px;top:103.5px" width="30" height="26" viewBox="0 0 30 26"><path d="M2.2 21.5 L5.5 10.2 L11.3 6 L17.5 12.2 L13.6 18.2 Z" fill="#c6c6c6"></path><path d="M2.8 21 L10.3 13.5" stroke="#535353" stroke-width="1.1"></path><circle cx="10.8" cy="13" r="1.3" fill="#535353"></circle><path d="M12.6 4.6 L16.6 0.8 L22.8 7 L19 11 Z" fill="#c6c6c6"></path><path d="M28 20 V24.5 H23.5 Z" fill="#c6c6c6"></path></svg>
<svg style="left:52px;top:103.5px" width="30" height="26" viewBox="0 0 30 26"><g transform="translate(3,0)"><path d="M2.2 21.5 L5.5 10.2 L11.3 6 L17.5 12.2 L13.6 18.2 Z" fill="#c6c6c6"></path><path d="M2.8 21 L10.3 13.5" stroke="#535353" stroke-width="1.1"></path><circle cx="10.8" cy="13" r="1.3" fill="#535353"></circle><path d="M12.6 4.6 L16.6 0.8 L22.8 7 L19 11 Z" fill="#c6c6c6"></path></g><path d="M1.5 2 C6 5 5 9 3 12.5 C1 16 1 19 5 20" fill="none" stroke="#c6c6c6" stroke-width="1.2"></path></svg>
<svg style="left:14.5px;top:133.5px" width="30" height="26" viewBox="0 0 30 26"><path d="M3.5 3.5 H20.5 V8 H19 L18.5 5.6 H13.3 V19 L16 19.5 V21 H8 V19.5 L10.7 19 V5.6 H5.5 L5 8 H3.5 Z" fill="#c6c6c6"></path><path d="M28 20 V24.5 H23.5 Z" fill="#c6c6c6"></path></svg>
<svg style="left:52px;top:133.5px" width="30" height="26" viewBox="0 0 30 26"><path d="M3.2 20.3 L19.7 3.5" stroke="#c6c6c6" stroke-width="1.4"></path><path d="M28 20 V24.5 H23.5 Z" fill="#c6c6c6"></path></svg>
<svg style="left:14.5px;top:163.5px" width="30" height="26" viewBox="0 0 30 26"><rect x="2.5" y="3.2" width="19" height="17.4" fill="#737373" stroke="#c6c6c6" stroke-width="1.2"></rect><path d="M28 20 V24.5 H23.5 Z" fill="#c6c6c6"></path></svg>
<svg style="left:52px;top:163.5px" width="30" height="26" viewBox="0 0 30 26"><path d="M21 1 C22 1.5 22.5 2.5 22 3.5 L12.5 15.5 L9.5 13 L19.5 1.5 C20 1 20.5 0.8 21 1 Z" fill="#c6c6c6"></path><path d="M8.5 14 L11.5 16.5 C11.5 20 8 21.5 2.5 20.5 C5 19.5 4.5 15 8.5 14 Z" fill="#c6c6c6"></path><path d="M28 20 V24.5 H23.5 Z" fill="#c6c6c6"></path></svg>
<svg style="left:14.5px;top:193.5px" width="30" height="26" viewBox="0 0 30 26"><path d="M5 17.5 A7.3 7.3 0 1 1 15.3 9" fill="#737373" stroke="#c6c6c6" stroke-width="1.2"></path><path d="M9 19 L21 5 L23.5 7.5 L12 21.5 L8.5 22.5 Z" fill="#c6c6c6"></path><path d="M28 20 V24.5 H23.5 Z" fill="#c6c6c6"></path></svg>
<svg style="left:52px;top:193.5px" width="30" height="26" viewBox="0 0 30 26"><path d="M12.5 1.5 L22 9.5 L15 17.5 L5.5 9.5 Z" fill="#c6c6c6"></path><path d="M5.5 9.5 L1.8 13.8 L8.5 21.5 L15 17.5" fill="none" stroke="#c6c6c6" stroke-width="1.3"></path><path d="M28 20 V24.5 H23.5 Z" fill="#c6c6c6"></path></svg>
<svg style="left:14.5px;top:223.5px" width="30" height="26" viewBox="0 0 30 26"><path d="M7 7.5 A8 8 0 0 1 21.5 12.5" fill="none" stroke="#c6c6c6" stroke-width="1.5"></path><path d="M2.5 5 L9.5 3.5 L8.5 10.5 Z" fill="#c6c6c6"></path><path d="M21.3 14 A8 8 0 0 1 3.5 14" fill="none" stroke="#c6c6c6" stroke-width="1.5" stroke-dasharray="1.4 2"></path><path d="M28 20 V24.5 H23.5 Z" fill="#c6c6c6"></path></svg>
<svg style="left:52px;top:223.5px" width="30" height="26" viewBox="0 0 30 26"><rect x="6.5" y="2.5" width="16" height="13.5" fill="none" stroke="#c6c6c6" stroke-width="1.2"></rect><rect x="1.5" y="11.5" width="11" height="9.5" fill="none" stroke="#c6c6c6" stroke-width="1.2"></rect><path d="M15 10 L19.5 5.5 M16 5 H20 V9" fill="none" stroke="#c6c6c6" stroke-width="1.2"></path><path d="M28 20 V24.5 H23.5 Z" fill="#c6c6c6"></path></svg>
<svg style="left:14.5px;top:253.5px" width="30" height="26" viewBox="0 0 30 26"><path d="M4 5 C8 1 11 4 9.5 8 C8 12 10 14 13.5 12 C17 9.5 21.5 9 22 15 C19 12.5 18 14 15.5 17 C12 21 6.5 19.5 7 14 C7.5 10 4 9 4 5 Z" fill="#c6c6c6"></path><path d="M2 21 L15 5" stroke="#c6c6c6" stroke-width="1"></path><circle cx="2.2" cy="20.8" r="1.6" fill="#535353" stroke="#c6c6c6" stroke-width="1"></circle><circle cx="15" cy="5" r="1.6" fill="#535353" stroke="#c6c6c6" stroke-width="1"></circle><circle cx="8.5" cy="13" r="1.8" fill="#535353" stroke="#c6c6c6" stroke-width="1"></circle><path d="M28 20 V24.5 H23.5 Z" fill="#c6c6c6"></path></svg>
<svg style="left:52px;top:253.5px" width="30" height="26" viewBox="0 0 30 26"><path d="M0.5 0.5 V17.5 L5 13 L12.5 12.5 Z" fill="#c6c6c6"></path><path d="M9 3.5 H22.5 V20.5 H8 V15" fill="none" stroke="#c6c6c6" stroke-width="1.2"></path><path d="M7 2.5h2.4v2.4H7z M14.5 2.5h2.4v2.4h-2.4z M21.3 2.5h2.4v2.4h-2.4z M21.3 10.5h2.4v2.4h-2.4z M21.3 19.3h2.4v2.4h-2.4z M14.5 19.3h2.4v2.4h-2.4z M6.8 19.3h2.4v2.4H6.8z" fill="#c6c6c6"></path><path d="M28 20 V24.5 H23.5 Z" fill="#c6c6c6"></path></svg>
<svg style="left:14.5px;top:283.5px" width="30" height="26" viewBox="0 0 30 26"><circle cx="8" cy="11" r="6.5" fill="none" stroke="#c6c6c6" stroke-width="1.2"></circle><path d="M5 5.5 A8 8 0 0 1 19.5 9" fill="none" stroke="#c6c6c6" stroke-width="1.2"></path><path d="M3 11 H14" stroke="#c6c6c6" stroke-width="1" stroke-dasharray="1.2 1.2"></path><path d="M11 6 A6 6 0 0 1 11 16" fill="none" stroke="#8a8a8a" stroke-width="1"></path><path d="M15.5 9.5 V23 L19 19.5 L25 19 Z" fill="#c6c6c6"></path><path d="M28 20 V24.5 H23.5 Z" fill="#c6c6c6"></path></svg>
<svg style="left:52px;top:283.5px" width="30" height="26" viewBox="0 0 30 26"><path d="M1.5 2 L12.5 6.5 V15 L1.5 21 Z M1.5 8.5 L12.5 10.5 M1.5 14.8 L12.5 12.8 M5.5 3.7 V18.8 M9.3 5.2 V16.8" fill="none" stroke="#c6c6c6" stroke-width="1.2"></path><path d="M1.5 21 H23" stroke="#9a9a9a" stroke-width="1.3"></path><path d="M5 18.7 H21" stroke="#8a8a8a" stroke-width="1.1"></path><path d="M8 16.5 H19" stroke="#7a7a7a" stroke-width="1"></path><path d="M10 14.5 H17.5" stroke="#6e6e6e" stroke-width="1"></path><path d="M11 12.5 H16" stroke="#666" stroke-width="1"></path><path d="M28 20 V24.5 H23.5 Z" fill="#c6c6c6"></path></svg>
<svg style="left:14.5px;top:313.5px" width="30" height="26" viewBox="0 0 30 26"><rect x="2.5" y="3.2" width="19" height="17.4" fill="none" stroke="#c6c6c6" stroke-width="1.3"></rect><path d="M2.5 9 C8 7 12 10 14 3.2 M2.5 15.5 C9 13 15 16 21.5 9 M8 3.2 C10 9 10.5 14 7 20.6 M2.5 19 C10 14 13 18 14.5 20.6 M14 11 C15.5 14 16 17 21.5 15.5" fill="none" stroke="#c6c6c6" stroke-width="1.2"></path></svg>
<svg style="left:52px;top:313.5px" width="30" height="26" viewBox="0 0 30 26"><defs><linearGradient id="gtool" x1="0" x2="1" y1="0" y2="0"><stop offset="0" stop-color="#3c3c3c"></stop><stop offset="1" stop-color="#c0c0c0"></stop></linearGradient></defs><rect x="2.5" y="3.2" width="19" height="17.4" fill="url(#gtool)" stroke="#c6c6c6" stroke-width="1.2"></rect></svg>
<svg style="left:14.5px;top:343.5px" width="30" height="26" viewBox="0 0 30 26"><path d="M13 9 L4 18 C2.5 19.5 2.2 21 3 21.8 C3.8 22.6 5.3 22.3 6.8 20.8 L15.8 11.8" fill="none" stroke="#c6c6c6" stroke-width="1.3"></path><path d="M11.5 6.5 L18.3 13.3 L20 11.7 L13.2 4.9 Z" fill="#c6c6c6"></path><path d="M14.5 7 L18 2.5 C19 1.3 21 1.2 22 2.3 C23 3.4 22.8 5.2 21.6 6.2 L17.5 9.8 Z" fill="#c6c6c6"></path><path d="M28 20 V24.5 H23.5 Z" fill="#c6c6c6"></path></svg>
<svg style="left:52px;top:343.5px" width="30" height="26" viewBox="0 0 30 26"><rect x="1.5" y="2.5" width="9.5" height="9.5" fill="#c6c6c6"></rect><circle cx="12.5" cy="11" r="4.8" fill="#8a8a8a" stroke="#c6c6c6" stroke-width="1.1"></circle><circle cx="18" cy="15.5" r="4.7" fill="#535353" stroke="#c6c6c6" stroke-width="1.3"></circle></svg>
<svg style="left:14.5px;top:373.5px" width="30" height="26" viewBox="0 0 30 26"><rect x="11.5" y="7.5" width="11" height="14" rx="1" fill="#5e5e5e" stroke="#c6c6c6" stroke-width="1.3"></rect><rect x="14" y="2.8" width="6" height="3.4" fill="#c6c6c6"></rect><path d="M15.5 6 h3 v1.5 h-3z" fill="#c6c6c6"></path><circle cx="17" cy="14.5" r="2.6" fill="none" stroke="#c6c6c6" stroke-width="1.5"></circle><path d="M1.5 3.5h2v2h-2z M5 3.5h2v2H5z M8.5 3.5h2v2h-2z M1.5 7h2v2h-2z M5 7h2v2H5z M1.5 10.5h2v2h-2z" fill="#c6c6c6"></path><path d="M28 20 V24.5 H23.5 Z" fill="#c6c6c6"></path></svg>
<svg style="left:52px;top:373.5px" width="30" height="26" viewBox="0 0 30 26"><path d="M2 2 V21 H22" fill="none" stroke="#c6c6c6" stroke-width="1.5"></path><rect x="5.5" y="10.5" width="4" height="10" fill="#c6c6c6"></rect><rect x="11.5" y="3.5" width="4" height="17" fill="#c6c6c6"></rect><rect x="17.5" y="6.5" width="4" height="14" fill="#c6c6c6"></rect><path d="M28 20 V24.5 H23.5 Z" fill="#c6c6c6"></path></svg>
<svg style="left:14.5px;top:403.5px" width="30" height="26" viewBox="0 0 30 26"><path d="M7.5 7.5 H16.5 L20.5 11.5 V21.5 H7.5 Z" fill="#737373" stroke="#c6c6c6" stroke-width="1.3"></path><path d="M1 6.5 H5.5 M7.5 1 V5.5" stroke="#c6c6c6" stroke-width="1.3"></path></svg>
<svg style="left:52px;top:403.5px" width="30" height="26" viewBox="0 0 30 26"><path d="M2.5 21.5 L14.5 5 L20 9.5 Z" fill="none" stroke="#c6c6c6" stroke-width="1.3"></path><path d="M14.8 3.8 L17.2 0.8 L23 5.5 L20.6 8.5 Z" fill="#c6c6c6"></path><path d="M28 20 V24.5 H23.5 Z" fill="#c6c6c6"></path></svg>
<svg style="left:14.5px;top:433.5px" width="30" height="26" viewBox="0 0 30 26"><path d="M7 21.5 C5.5 18 3.5 15.5 1.5 12.5 C1 11.5 2.3 10.6 3.3 11.4 L6.5 14.3 L6 5 C6 3.5 8 3.5 8.2 5 L9 11 L9.4 2.8 C9.5 1.2 11.7 1.2 11.8 2.8 L12 11 L13.5 3.8 C13.8 2.3 15.8 2.6 15.7 4.2 L15 11.8 L17.6 6.8 C18.3 5.5 20 6.3 19.6 7.7 C18.5 11.5 17.8 14.5 17.3 17.5 C17 19.5 16.5 20.5 16 21.5 C14 23 9 23 7 21.5 Z" fill="#c6c6c6"></path><path d="M28 20 V24.5 H23.5 Z" fill="#c6c6c6"></path></svg>
<svg style="left:52px;top:433.5px" width="30" height="26" viewBox="0 0 30 26"><circle cx="10" cy="10" r="7.3" fill="none" stroke="#c6c6c6" stroke-width="1.5"></circle><path d="M15.5 15.5 L22.5 22.5" stroke="#c6c6c6" stroke-width="2.4"></path></svg>
<div class="a" style="left:7px;top:463px;width:76px;height:1px;background:#484848"></div>
<div class="a" style="left:30px;top:492px;width:45px;height:44px;border:1px solid #2e2e2e;background:#535353"></div>
<div class="a" style="left:41px;top:503px;width:23px;height:22px;border:1px solid #2e2e2e;background:#535353"></div>
<span class="t b" style="left: 67px; font-size: 9px; color: rgb(232, 232, 232); top: 494.4px;">?</span>
<span class="t b" style="left: 33px; font-size: 9px; color: rgb(232, 232, 232); top: 525.4px;">?</span>
<span class="t b" style="left: 67px; font-size: 9px; color: rgb(232, 232, 232); top: 525.4px;">?</span>
<div class="a" style="left:7px;top:469px;width:45px;height:45px;border:1px solid #2e2e2e;background:#535353"></div>
<span class="t b" style="left: 25px; font-size: 17px; color: rgb(240, 240, 240); top: 483.6px;">?</span>
<svg style="left:63px;top:471px" width="14" height="14" viewBox="0 0 14 14"><path d="M2.5 6.5 C2.5 3 7 2.5 9.5 4.5 C11.5 6 11.5 9 11 11" fill="none" stroke="#6c6c6c" stroke-width="1.8"></path><path d="M0 5 L3 1 L6 5.5 Z M8 10 L14 10 L11 14 Z" fill="#6c6c6c"></path></svg>
<svg style="left:8px;top:521px" width="15" height="15" viewBox="0 0 15 15"><rect x="5" y="5" width="9" height="9" fill="#111" stroke="#e8e8e8" stroke-width="1"></rect><rect x="4.5" y="4.5" width="10" height="10" fill="none" stroke="#e8e8e8" stroke-width="1"></rect><rect x="7.5" y="7.5" width="4" height="4" fill="#535353"></rect><rect x="0.5" y="0.5" width="9" height="9" fill="#fff" stroke="#111" stroke-width="1"></rect></svg>
<div class="a" style="left:8px;top:545px;width:72px;height:24px;border:1px solid #5e5e5e"></div>
<div class="a" style="left:32px;top:545px;width:1px;height:24px;background:#5e5e5e"></div>
<div class="a" style="left:56px;top:545px;width:24px;height:24px;background:#2b2b2b"></div>
<div class="a" style="left:10px;top:549px;width:17px;height:17px;border:1px solid #000;background:#3f143d"></div>
<div class="a" style="left:35px;top:549px;width:17px;height:17px;border:2px solid #000;background:linear-gradient(90deg,#fff,#222)"></div>
<svg style="left:60px;top:549px" width="17" height="17" viewBox="0 0 17 17"><rect x="0.5" y="0.5" width="16" height="16" fill="#fff" stroke="#000"></rect><path d="M1.5 15.5 L15.5 1.5" stroke="#f01515" stroke-width="3"></path></svg>
<div class="a" style="left:8px;top:576px;width:72px;height:23px;border:1px solid #5e5e5e"></div>
<div class="a" style="left:8px;top:576px;width:24px;height:23px;background:#2b2b2b"></div>
<div class="a" style="left:56px;top:576px;width:1px;height:23px;background:#5e5e5e"></div>
<svg style="left:13px;top:581px" width="15" height="14" viewBox="0 0 15 14"><circle cx="5.5" cy="5.5" r="4.8" fill="#8a8a8a" stroke="#d8d8d8" stroke-width="1.2"></circle><rect x="7" y="7" width="7" height="6" fill="#d8d8d8"></rect></svg>
<svg style="left:37px;top:581px" width="15" height="14" viewBox="0 0 15 14"><rect x="7" y="7" width="7" height="6" fill="#c6c6c6"></rect><circle cx="5.5" cy="5.5" r="4.8" fill="#5a5a5a" stroke="#c6c6c6" stroke-width="1.2"></circle></svg>
<svg style="left:62px;top:582px" width="12" height="12" viewBox="0 0 12 12"><circle cx="6" cy="6" r="4.8" fill="none" stroke="#6a6a6a" stroke-width="1.2"></circle><path d="M6 6 H10.5 A4.5 4.5 0 0 1 6 10.5 Z" fill="#6a6a6a"></path></svg>
<svg style="left:31px;top:609px" width="28" height="20" viewBox="0 0 28 20"><rect x="0.7" y="5.7" width="16" height="13.6" fill="#6a6a6a" stroke="#c6c6c6" stroke-width="1.3"></rect><rect x="10.7" y="0.7" width="16.6" height="13.6" fill="#6a6a6a" stroke="#c6c6c6" stroke-width="1.3"></rect><path d="M10.7 2.2 H27.3" stroke="#c6c6c6" stroke-width="2"></path></svg>
<svg style="left:35px;top:656px" width="20" height="6" viewBox="0 0 20 6"><circle cx="3" cy="3" r="2" fill="#d0d0d0"></circle><circle cx="10" cy="3" r="2" fill="#d0d0d0"></circle><circle cx="17" cy="3" r="2" fill="#d0d0d0"></circle></svg>
</div>
<div class="a" id="layers" style="left:1227px;top:900px;width:607px;height:117px;background:#535353;box-shadow:0 3px 8px rgba(0,0,0,.4),0 0 0 1px #3a3a3a;overflow:hidden">
<div class="a" style="left:8px;top:0;width:591.500px;height:82.5px;background:linear-gradient(180deg,#474747,#4f4f4f);border:1px solid #5c5c5c;border-top:none;border-radius:0 0 3px 3px"></div>
<div class="a" style="left:9px;top:31px;width:575px;height:1px;background:#585858"></div>
<div class="a" style="left:9px;top:57px;width:575px;height:1px;background:#585858"></div>
<div class="a" style="left:34.5px;top:0;width:1px;height:82px;background:#585858"></div>
<div class="a" style="left:60.5px;top:0;width:1px;height:82px;background:#585858"></div>
<div class="a" style="left:539px;top:0;width:1px;height:82px;background:#585858"></div>
<svg style="left:42px;top:11.5px" width="11" height="13" viewBox="0 0 11 13"><path d="M2.500 6 V4 A3 3 0 0 1 8.500 4 V6" fill="none" stroke="#b4b4b4" stroke-width="1.700"></path><rect x="0.500" y="5.5" width="10" height="7.500" rx="1" fill="#b4b4b4"></rect><circle cx="5.500" cy="8.500" r="1.1" fill="#4a4a4a"></circle><rect x="5" y="8.500" width="1" height="2.500" fill="#4a4a4a"></rect></svg>
<div class="a" style="left:62px;top:11px;width:4px;height:20px;background:#4b7bff"></div>
<div class="a" style="left:185px;top:12px;width:22px;height:17px;background:#c9ba98;border:1px solid #111"></div>
<span class="t" style="left: 214.5px; font-size: 14px; color: rgb(210, 210, 210); letter-spacing: -0.09px; top: 10.8px;">&lt;Tracé&gt;</span>
<div class="a" style="left:548px;top:13.5px;width:10px;height:10px;border:1.300px solid #c8c8c8;border-radius:50%"></div>
<div class="a" style="left:565px;top:12.5px;width:10px;height:10px;border:1px solid #111;background:#4b7bff"></div>
<svg style="left:42px;top:38.0px" width="11" height="13" viewBox="0 0 11 13"><path d="M2.500 6 V4 A3 3 0 0 1 8.500 4 V6" fill="none" stroke="#b4b4b4" stroke-width="1.700"></path><rect x="0.500" y="5.5" width="10" height="7.500" rx="1" fill="#b4b4b4"></rect><circle cx="5.500" cy="8.500" r="1.1" fill="#4a4a4a"></circle><rect x="5" y="8.500" width="1" height="2.500" fill="#4a4a4a"></rect></svg>
<div class="a" style="left:62px;top:32.5px;width:4px;height:24.5px;background:#4b7bff"></div>
<svg style="left:185px;top:33.5px" width="22" height="22" viewBox="0 0 22 22"><rect x="0.500" y="0.5" width="21" height="21" fill="#cc1d85" stroke="#111"></rect><rect x="1" y="1" width="20" height="2.500" fill="#eee"></rect><path d="M2 21 V17 A9 9 0 0 1 20 17 V21 Z" fill="#f0f0f0"></path></svg>
<span class="t" style="left: 214.5px; font-size: 14px; color: rgb(210, 210, 210); letter-spacing: -0.09px; top: 37.1px;">&lt;Tracé&gt;</span>
<div class="a" style="left:548px;top:40.0px;width:10px;height:10px;border:1.300px solid #c8c8c8;border-radius:50%"></div>
<div class="a" style="left:565px;top:39.0px;width:10px;height:10px;border:1px solid #111;background:#4b7bff"></div>
<svg style="left:42px;top:64.3px" width="11" height="13" viewBox="0 0 11 13"><path d="M2.500 6 V4 A3 3 0 0 1 8.500 4 V6" fill="none" stroke="#b4b4b4" stroke-width="1.700"></path><rect x="0.500" y="5.5" width="10" height="7.500" rx="1" fill="#b4b4b4"></rect><circle cx="5.500" cy="8.500" r="1.1" fill="#4a4a4a"></circle><rect x="5" y="8.500" width="1" height="2.500" fill="#4a4a4a"></rect></svg>
<div class="a" style="left:62px;top:59px;width:4px;height:24.5px;background:#4b7bff"></div>
<svg style="left:185px;top:60px" width="22" height="22" viewBox="0 0 22 22"><rect x="0.500" y="0.5" width="21" height="21" fill="#cc1d85" stroke="#111"></rect><path d="M1 1 H21 V5 A10 9 0 0 1 1 5 Z" fill="#f4f4f4"></path><rect x="1" y="19" width="20" height="2" fill="#eee"></rect></svg>
<span class="t" style="left: 214.5px; font-size: 14px; color: rgb(210, 210, 210); letter-spacing: -0.09px; top: 63.7px;">&lt;Tracé&gt;</span>
<div class="a" style="left:548px;top:66.3px;width:10px;height:10px;border:1.300px solid #c8c8c8;border-radius:50%"></div>
<div class="a" style="left:565px;top:65.3px;width:10px;height:10px;border:1px solid #111;background:#4b7bff"></div>
<div class="a" style="left:585px;top:-10px;width:13px;height:78px;background:#5c5c5c;border-radius:6px"></div>
<svg style="left:586px;top:72px" width="10" height="6" viewBox="0 0 10 6"><path d="M0.7 0.7 L5 5 L9.3 0.7" fill="none" stroke="#b0b0b0" stroke-width="1.200"></path></svg>
<span class="t" style="left: 8px; font-size: 14px; color: rgb(220, 220, 220); -webkit-text-stroke: 0.5px rgb(220, 220, 220); letter-spacing: -0.51px; top: 87.8px;">1 Calque</span>
<svg style="left:394.5px;top:87px" width="16" height="16" viewBox="0 0 16 16"><path d="M7 3.500 H1 V15 H12.500 V9" fill="none" stroke="#c6c6c6" stroke-width="1.500"></path><path d="M7.500 8.500 L14.500 1.500 M9.500 1 H15 V6.500" fill="none" stroke="#c6c6c6" stroke-width="1.500"></path></svg>
<svg style="left:427.5px;top:87px" width="16" height="16" viewBox="0 0 16 16"><circle cx="6.500" cy="6.500" r="5" fill="none" stroke="#c6c6c6" stroke-width="1.500"></circle><path d="M10.200 10.200 L15 15" stroke="#c6c6c6" stroke-width="2"></path></svg>
<svg style="left:460px;top:88px" width="15" height="14" viewBox="0 0 15 14"><rect x="0.750" y="0.75" width="9.500" height="9" fill="#8a8a8a" stroke="#c6c6c6" stroke-width="1.500"></rect><rect x="5" y="4.500" width="9" height="8.500" fill="#6a6a6a" stroke="#8a8a8a" stroke-width="1.200"></rect><rect x="5" y="4.500" width="5" height="5" fill="#c6c6c6"></rect></svg>
<svg style="left:490px;top:87px" width="20" height="15" viewBox="0 0 20 15"><path d="M1 0 V4.500 H6 M3.500 2 L6.500 4.500 L3.500 7" fill="none" stroke="#c6c6c6" stroke-width="1.500"></path><rect x="8.500" y="3" width="10.500" height="10.500" fill="none" stroke="#c6c6c6" stroke-width="1.500"></rect><path d="M13.750 5.500 V11 M11 8.250 H16.500" stroke="#c6c6c6" stroke-width="1.500"></path></svg>
<svg style="left:526px;top:88px" width="14" height="14" viewBox="0 0 14 14"><rect x="0.750" y="0.75" width="12.500" height="12.500" fill="none" stroke="#c6c6c6" stroke-width="1.500"></rect><path d="M7 3.500 V10.500 M3.500 7 H10.500" stroke="#c6c6c6" stroke-width="1.500"></path></svg>
<svg style="left:558px;top:87px" width="13" height="15" viewBox="0 0 13 15"><path d="M0 3H13 M4.500 3 V1 H8.500 V3" fill="none" stroke="#6a6a6a" stroke-width="1.200"></path><path d="M1.500 3.500 V14.500 H11.500 V3.500" fill="none" stroke="#6a6a6a" stroke-width="1.200"></path><path d="M4.500 5.500V12.500 M6.500 5.500V12.500 M8.500 5.500V12.500" stroke="#6a6a6a"></path></svg>
<div class="a" style="left:0;top:107.5px;width:607px;height:2px;background:#3e3e3e"></div>
<div class="a" style="left:0;top:109.5px;width:607px;height:8px;background:#494949"></div>
<div class="a" style="left:291px;top:110.5px;width:24px;height:5px;background:repeating-linear-gradient(90deg,#333 0 3px,transparent 3px 4px)"></div>
</div>
<div class="a" id="dlg" style="left:1127px;top:116px;width:996px;height:797px;background:#535353;border-radius:7px 7px 6px 6px;box-shadow:0 14px 36px rgba(0,0,0,.3),0 0 0 1px rgba(40,40,40,.35)">
<div class="a" style="left:0;top:0;width:996px;height:22px;border-radius:7px 7px 0 0;background:linear-gradient(180deg,#d6d6d6,#b8b8b8);border-top:1px solid #e6e6e6"></div>
<span class="t" style="left: 386.5px; font-size: 13px; color: rgb(44, 44, 44); -webkit-text-stroke: 0.15px rgb(44, 44, 44); letter-spacing: 0.29px; top: 4.8px;">Redéfinir les couleurs de l'illustration</span>
<div class="a" style="left:25px;top:49px;width:27px;height:27px;background:#888;border:1px solid #000"></div>
<div class="a" style="left:28px;top:52px;width:21px;height:21px;background:#4a073e;border:1px solid #000"></div>
<div class="a" style="left:64px;top:47.5px;width:505px;height:32px;background:#4a4a4a;border:1px solid #5e5e5e;border-radius:2px"></div>
<div class="vd" style="left:545.5px;top:48.5px;height:30px"></div>
<svg style="left:552px;top:60px" width="10" height="6" viewBox="0 0 10 6"><path d="M0.7 0.7 L5 5 L9.3 0.7" fill="none" stroke="#e4e4e4" stroke-width="1.5"></path></svg>
<svg style="left:69px;top:54px" width="20" height="20" viewBox="0 0 20 20"><rect width="20" height="20" fill="#ffa8f0"></rect><path d="M1 1 H19 V19 H1 Z" fill="none" stroke="#fff" stroke-width="2"></path><path d="M2.5 2.500 H17.500 V13 L13 17.500 H2.500 Z" fill="#ffa8f0" stroke="#000" stroke-width="1"></path><path d="M18 13.500 V18 H13.500 Z" fill="#fff"></path></svg>
<svg style="left:89px;top:54px" width="20" height="20" viewBox="0 0 20 20"><rect width="20" height="20" fill="#fa4600"></rect><path d="M20 11 V20 H11 Z" fill="#fff"></path><path d="M20 11 L11 20" stroke="#000" stroke-width="1"></path></svg>
<svg style="left:109px;top:54px" width="20" height="20" viewBox="0 0 20 20"><rect width="20" height="20" fill="#cc1d85"></rect><path d="M20 11 V20 H11 Z" fill="#fff"></path><path d="M20 11 L11 20" stroke="#000" stroke-width="1"></path></svg>
<svg style="left:129px;top:54px" width="20" height="20" viewBox="0 0 20 20"><rect width="20" height="20" fill="#5a6400"></rect><path d="M20 11 V20 H11 Z" fill="#fff"></path><path d="M20 11 L11 20" stroke="#000" stroke-width="1"></path></svg>
<svg style="left:149px;top:54px" width="20" height="20" viewBox="0 0 20 20"><rect width="20" height="20" fill="#4a073e"></rect></svg>
<div class="fld" style="left:582px;top:49px;width:174px;height:25px;border-radius:3px"></div>
<span class="t w" style="left: 589.5px; font-size: 15px; letter-spacing: 1.05px; top: 53.8px;">hot</span>
<div class="a" style="left:760.5px;top:49.5px;width:109px;height:25px;border:1px solid #6e6e6e;border-radius:3px"></div>
<span class="t b w" style="left: 772.5px; font-size: 15px; letter-spacing: 0px; top: 54.3px;">Réinitialiser</span>
<svg style="left:883px;top:56px" width="18" height="16" viewBox="0 0 18 16"><path d="M7.500 0 H10.500 V5 H13.500 L9 10 L4.500 5 H7.500 Z" fill="#c6c6c6"></path><path d="M0 10.500 L3 8.500 H5 L7.500 11.500 H10.500 L13 8.500 H15 L18 10.500 V16 H0 Z" fill="#c6c6c6"></path><circle cx="3.500" cy="13" r="1.1" fill="#535353"></circle></svg>
<svg style="left:912.5px;top:56.5px" width="18" height="14" viewBox="0 0 18 14"><path d="M0 1.500 Q0 0.500 1 0.500 H6 L7.500 2.500 H17 Q18 2.500 18 3.500 V14 H0 Z" fill="#c6c6c6"></path></svg>
<svg style="left:944.5px;top:56px" width="14" height="16" viewBox="0 0 14 16"><path d="M0 3H14 M4.500 3 V1 H9.500 V3" fill="none" stroke="#c6c6c6" stroke-width="1.400"></path><path d="M1.700 3.500 V15.300 H12.300 V3.500" fill="none" stroke="#c6c6c6" stroke-width="1.400"></path><path d="M4.700 5.500V13 M7 5.500V13 M9.300 5.500V13" stroke="#c6c6c6" stroke-width="1.200"></path></svg>
<div class="a" style="left:25.5px;top:105px;width:615px;height:394px;border:1px solid #5e5e5e;border-radius:2px"></div>
<div class="a" style="left:239px;top:99px;width:188px;height:12px;background:#535353"></div>
<div class="a" style="left:245px;top:92.5px;width:176px;height:24.5px;border:1px solid #5e5e5e;border-radius:3px;background:#535353"></div>
<div class="a" style="left:331px;top:93px;width:89.500px;height:23.500px;background:#2b2b2b;border-radius:0 2px 2px 0"></div>
<span class="t b w" style="left: 257.5px; font-size: 16px; letter-spacing: -0.28px; top: 97.2px;">Modifier</span>
<span class="t b" style="left: 343.5px; font-size: 16px; color: rgb(75, 166, 246); letter-spacing: -0.23px; top: 97.2px;">Attribuer</span>
<span class="t" style="left: 44.5px; font-size: 15px; color: rgb(214, 214, 214); letter-spacing: 0.59px; top: 145.3px;">Paramètre prédéfini :</span>
<div class="fld" style="left:202px;top:139px;width:170px;height:25px;background:#4a4a4a"></div>
<span class="t w" style="left: 210px; font-size: 15px; -webkit-text-stroke: 0.6px rgb(242, 242, 242); letter-spacing: 0.32px; top: 145.3px;">Personnalisé</span>
<svg style="left:355px;top:148.5px" width="10" height="6" viewBox="0 0 10 6"><path d="M0.7 0.7 L5 5 L9.3 0.7" fill="none" stroke="#e4e4e4" stroke-width="1.5"></path></svg>
<svg style="left:385px;top:143px" width="20" height="20" viewBox="0 0 20 20"><rect x="0.750" y="0.75" width="18.500" height="18.5" rx="1" fill="none" stroke="#b0b0b0" stroke-width="1.500"></rect><rect x="0.750" y="0.75" width="18.5" height="4.500" fill="#b0b0b0"></rect><path d="M4 10H6.500 M8.500 10H16 M4 14.500H6.500 M8.500 14.500H16" stroke="#b0b0b0" stroke-width="1.800"></path></svg>
<span class="t" style="left: 424.5px; font-size: 15px; color: rgb(214, 214, 214); letter-spacing: 0.51px; top: 145.3px;">Couleurs :</span>
<div class="fld" style="left:503px;top:139px;width:119px;height:25px"></div>
<div class="a" style="left:504px;top:140px;width:21px;height:23px;background:#4d4d4d"></div>
<div class="a" style="left:600px;top:140px;width:21px;height:23px;background:#4d4d4d"></div>
<div class="vd" style="left:525px;top:140px;height:23px"></div>
<div class="vd" style="left:599.5px;top:140px;height:23px"></div>
<svg style="left:509.5px;top:142.5px" width="10" height="18" viewBox="0 0 10 18"><path d="M0.7 5.3 L5 1 L9.3 5.3 M0.7 12.7 L5 17 L9.3 12.7" fill="none" stroke="#e4e4e4" stroke-width="1.3"></path></svg>
<span class="t w" style="left: 530px; font-size: 15px; -webkit-text-stroke: 0.6px rgb(242, 242, 242); letter-spacing: 0.79px; top: 144.8px;">Auto</span>
<svg style="left:605px;top:148.5px" width="10" height="6" viewBox="0 0 10 6"><path d="M0.7 0.7 L5 5 L9.3 0.7" fill="none" stroke="#e4e4e4" stroke-width="1.5"></path></svg>
<span class="t" style="left: 44px; font-size: 13.5px; color: rgb(214, 214, 214); letter-spacing: 0.03px; top: 188.6px;">Couleurs actuelles (101)</span>
<span class="t" style="left: 526px; font-size: 13.5px; color: rgb(214, 214, 214); letter-spacing: -0.29px; top: 190.6px;">Nouveau</span>
<svg style="left:600.5px;top:192.5px" width="14" height="9" viewBox="0 0 14 9"><path d="M0 1H14 M0 4.500H14 M0 8H14" stroke="#b8b8b8" stroke-width="1.200"></path></svg>
<div class="a" style="left:44px;top:206.5px;width:578.500px;height:241.500px;border:1px solid #3c3c3c"></div>
<svg style="left:609px;top:211px" width="9" height="5" viewBox="0 0 10 6"><path d="M0.7 5 L5 0.7 L9.3 5" fill="none" stroke="#5e5e5e" stroke-width="1.2"></path></svg>
<svg style="left:609px;top:437px" width="9" height="5" viewBox="0 0 10 6"><path d="M0.7 0.7 L5 5 L9.3 0.7" fill="none" stroke="#5e5e5e" stroke-width="1.2"></path></svg>
<div class="a" style="left:45px;top:238.5px;width:561px;height:1px;background:#4a4a4a"></div>
<div class="a" style="left:45px;top:271px;width:561px;height:1px;background:#4a4a4a"></div>
<div class="a" style="left:45px;top:304px;width:561px;height:1px;background:#4a4a4a"></div>
<div class="a" style="left:45px;top:336.5px;width:561px;height:1px;background:#4a4a4a"></div>
<div class="a" style="left:45px;top:369px;width:561px;height:1px;background:#4a4a4a"></div>
<div class="a" style="left:45px;top:337.5px;width:561px;height:31.500px;background:#4f6f94"></div>
<div class="a" style="left:63px;top:212px;width:465.500px;height:23px;border:2px solid #000;background:linear-gradient(90deg,#dc1f1a 0%,#e0452f 20%,#e66a4c 38%,#ee9478 55%,#f3b6a2 70%,#f7cfc4 80%,#f4c2b3 84%,#fae2da 92%,#fff6f3 100%)"></div>
<svg style="left:532.5px;top:219px" width="15" height="9" viewBox="0 0 15 9"><path d="M0 4.500H13.500 M9.500 0.700 L13.700 4.500 L9.500 8.300" fill="none" stroke="#c8c8c8" stroke-width="1.300"></path></svg>
<div class="a" style="left:550.5px;top:212px;width:38.500px;height:23px;border:2px solid #000;background:#fca7f1;"></div>
<div class="a" style="left:552.5px;top:224px;width:34.500px;height:9px;background:linear-gradient(90deg,#fca7f1,#fff2fd);border-top:2px solid #000;box-sizing:content-box;height:7px"></div>
<div class="a" style="left:63px;top:244px;width:465.500px;height:23px;border:2px solid #000;background:#ffeebf"></div>
<svg style="left:532.5px;top:251px" width="15" height="9" viewBox="0 0 15 9"><path d="M0 4.500H13.500 M9.500 0.700 L13.700 4.500 L9.500 8.300" fill="none" stroke="#c8c8c8" stroke-width="1.300"></path></svg>
<div class="a" style="left:550.5px;top:244px;width:38.500px;height:23px;border:2px solid #000;background:#fa4600;"></div>
<div class="a" style="left:552.5px;top:256px;width:34.500px;height:9px;background:#fa4600;border-top:2px solid #000;box-sizing:content-box;height:7px"></div>
<div class="a" style="left:63px;top:276.8px;width:465.500px;height:23px;border:2px solid #000;background:#4a073e"></div>
<svg style="left:532.5px;top:283.8px" width="15" height="9" viewBox="0 0 15 9"><path d="M0 4.500H13.500 M9.500 0.700 L13.700 4.500 L9.500 8.300" fill="none" stroke="#c8c8c8" stroke-width="1.300"></path></svg>
<div class="a" style="left:550.5px;top:276.8px;width:38.500px;height:23px;border:2px solid #000;background:#cc1d85;"></div>
<div class="a" style="left:552.5px;top:288.8px;width:34.500px;height:9px;background:#cc1d85;border-top:2px solid #000;box-sizing:content-box;height:7px"></div>
<div class="a" style="left:63px;top:309px;width:465.500px;height:23px;border:2px solid #000;background:#c7207f"></div>
<svg style="left:532.5px;top:316px" width="15" height="9" viewBox="0 0 15 9"><path d="M0 4.500H13.500 M9.500 0.700 L13.700 4.500 L9.500 8.300" fill="none" stroke="#c8c8c8" stroke-width="1.300"></path></svg>
<div class="a" style="left:550.5px;top:309px;width:38.500px;height:23px;border:2px solid #000;background:#5a6400;"></div>
<div class="a" style="left:552.5px;top:321px;width:34.500px;height:9px;background:#5a6400;border-top:2px solid #000;box-sizing:content-box;height:7px"></div>
<div class="a" style="left:63px;top:342px;width:465.500px;height:23px;border:2px solid #000;background:linear-gradient(90deg,#1f1f1f 0%,#2b2a29 40%,#3a3838 70%,#474545 93.200%,#fff8f6 93.300%,#fff8f6 100%)"></div>
<svg style="left:532.5px;top:349px" width="15" height="9" viewBox="0 0 15 9"><path d="M0 4.500H13.500 M9.500 0.700 L13.700 4.500 L9.500 8.300" fill="none" stroke="#c8c8c8" stroke-width="1.300"></path></svg>
<div class="a" style="left:550.5px;top:342px;width:38.500px;height:23px;border:2px solid #000;background:#43063a;outline:1px solid #fff;outline-offset:-2px;"></div>
<div class="a" style="left:552.5px;top:354px;width:34.500px;height:9px;background:linear-gradient(90deg,#521548,#6a2c60);border-top:2px solid #000;box-sizing:content-box;height:7px"></div>
<div class="a" style="left:51.5px;top:277px;width:11.500px;height:23px;border:1px solid #b0b0b0;border-radius:1px"></div>
<div class="a" style="left:55px;top:281px;width:4px;height:15px;background:repeating-linear-gradient(180deg,#b0b0b0 0 1px,transparent 1px 2px)"></div>
<div class="a" style="left:592px;top:277px;width:11px;height:23px;border:1px solid #b0b0b0;border-radius:1px"></div>
<svg style="left:595px;top:287px" width="5" height="3" viewBox="0 0 5 3"><path d="M0 0H5L2.500 3Z" fill="#d0d0d0"></path></svg>
<div class="a" style="left:149.5px;top:298px;width:250px;height:20px;background:#c9c9c9;box-shadow:0 3px 8px rgba(0,0,0,.35)"></div>
<span class="t" style="left: 157px; font-size: 13px; color: rgb(60, 60, 60); -webkit-text-stroke: 0.15px rgb(60, 60, 60); letter-spacing: 0.53px; top: 301.5px;">Faire glisser pour déplacer la couleur</span>
<svg style="left:50px;top:465px" width="20" height="13" viewBox="0 0 20 13"><rect x="0.500" y="0.5" width="19" height="12" fill="none" stroke="#6a6a6a"></rect><path d="M6.800 0.500V12.500 M13.200 0.500V12.500" stroke="#6a6a6a"></path></svg>
<svg style="left:83px;top:465px" width="20" height="13" viewBox="0 0 20 13"><rect x="0.500" y="0.5" width="4.500" height="12" fill="none" stroke="#6a6a6a"></rect><rect x="7.700" y="0.5" width="4.500" height="12" fill="none" stroke="#6a6a6a"></rect><rect x="15" y="0.500" width="4.500" height="12" fill="none" stroke="#6a6a6a"></rect></svg>
<svg style="left:115px;top:463px" width="20" height="17" viewBox="0 0 20 17"><rect x="0.500" y="2.5" width="19" height="12" fill="none" stroke="#6a6a6a"></rect><path d="M6.800 2.500V14.500 M13.200 2.500V14.500" stroke="#6a6a6a"></path><path d="M1 0.500 L19 16.500" stroke="#6a6a6a" stroke-width="1.300"></path></svg>
<svg style="left:148px;top:464px" width="21" height="15" viewBox="0 0 21 15"><rect x="8.500" y="0.75" width="11.500" height="9" fill="none" stroke="#c6c6c6" stroke-width="1.500"></rect><path d="M12.300 1V9.500 M14.500 1V9.500 M16.500 1V9.500" stroke="#c6c6c6"></path><path d="M4.500 7V14.500 M0.800 10.700H8.200" stroke="#c6c6c6" stroke-width="2"></path></svg>
<svg style="left:531px;top:462px" width="20" height="19" viewBox="0 0 20 19"><g fill="none" stroke="#c6c6c6" stroke-width="1.200"><rect x="0.600" y="0.6" width="4" height="6"></rect><rect x="8" y="0.600" width="4" height="6"></rect><rect x="15.400" y="0.6" width="4" height="6"></rect></g><path d="M2 14.500H18 M4.500 11.500 L1.500 14.500 L4.500 17.500 M15.500 11.500 L18.500 14.500 L15.500 17.500" fill="none" stroke="#c6c6c6" stroke-width="1.400"></path></svg>
<svg style="left:564px;top:462px" width="20" height="19" viewBox="0 0 20 19"><rect x="0.600" y="0.6" width="18.800" height="6" fill="#6e6e6e" stroke="#c6c6c6" stroke-width="1.200"></rect><path d="M6.800 0.600V6.600 M13.200 0.600V6.600" stroke="#c6c6c6"></path><path d="M1 11.500 H5 L12 16.500 H18 M1 16.500 H5 L12 11.500 H18 M15.500 9.500 L18.500 11.500 L15.500 13.500 M15.500 14.500 L18.500 16.500 L15.500 18.500" fill="none" stroke="#c6c6c6" stroke-width="1.300"></path></svg>
<svg style="left:596px;top:462px" width="21" height="20" viewBox="0 0 21 20"><path d="M4 13.400 H0.600 V0.600 H20 V13.400 H17" fill="none" stroke="#c6c6c6" stroke-width="1.200"></path><path d="M7 0.600V4 M13.500 0.600V4" stroke="#c6c6c6"></path><rect x="0.600" y="0.6" width="19.400" height="3.500" fill="#7a7a7a" opacity=".6"></rect><circle cx="10.500" cy="10.500" r="4.800" fill="#535353" stroke="#c6c6c6" stroke-width="1.500"></circle><path d="M14 14 L19 19" stroke="#c6c6c6" stroke-width="2.200"></path></svg>
<div class="a" style="left:25px;top:518px;width:38.500px;height:38.500px;background:#4a073e;border:1px solid #f0f0f0"></div>
<div class="a" style="left:44px;top:573px;width:19.500px;height:19px;background:#2f0332;border:1px solid #f0f0f0"></div>
<svg style="left:25.5px;top:574.5px" width="15" height="16" viewBox="0 0 15 16"><path d="M7.500 0.700 L14.300 4.200 V11.800 L7.500 15.300 L0.700 11.800 V4.200 Z M0.700 4.200 L7.500 7.700 L14.300 4.200 M7.500 7.700 V15.300" fill="none" stroke="#a8a8a8" stroke-width="1.100"></path></svg>
<span class="t" style="left: 76px; font-size: 15px; color: rgb(214, 214, 214); top: 524.7px;">T</span>
<div class="a" style="left:100px;top:529.5px;width:157px;height:5px;background:linear-gradient(90deg,#5a0a0a 0%,#55500a 16%,#0a500a 33%,#0a4a50 50%,#0a0a55 66%,#4a0a50 83%,#5a0a0a 100%);box-shadow:0 0 0 1px #4a4a4a"></div>
<svg style="left:233px;top:535.0px" width="12" height="9" viewBox="0 0 12 9"><path d="M6 0 L11.500 5.500 V8.500 H0.500 V5.500 Z" fill="#c8c8c8"></path></svg>
<div class="fld" style="left:269.5px;top:519.5px;width:61px;height:24.500px;background:#454545"></div>
<span class="t w" style="left: 275.5px; font-size: 15px; -webkit-text-stroke: 0.6px rgb(242, 242, 242); letter-spacing: 0.93px; top: 524.7px;">314,77</span>
<span class="t" style="left: 334.5px; font-size: 13px; color: rgb(214, 214, 214); top: 526.4px;">°</span>
<span class="t" style="left: 76px; font-size: 15px; color: rgb(214, 214, 214); top: 565.6px;">S</span>
<div class="a" style="left:100px;top:570px;width:157px;height:5px;background:linear-gradient(90deg,#4c4a4c 0%,#4a2f46 50%,#4a073e 100%);box-shadow:0 0 0 1px #4a4a4a"></div>
<svg style="left:235px;top:575.5px" width="12" height="9" viewBox="0 0 12 9"><path d="M6 0 L11.500 5.500 V8.500 H0.500 V5.500 Z" fill="#c8c8c8"></path></svg>
<div class="fld" style="left:269.5px;top:560.8px;width:61px;height:24.500px;background:#454545"></div>
<span class="t w" style="left: 275.5px; font-size: 15px; -webkit-text-stroke: 0.6px rgb(242, 242, 242); letter-spacing: 0.79px; top: 565.6px;">89,04</span>
<span class="t" style="left: 333px; font-size: 13px; color: rgb(214, 214, 214); top: 567.3px;">%</span>
<span class="t" style="left: 76px; font-size: 15px; color: rgb(214, 214, 214); top: 606.9px;">L</span>
<div class="a" style="left:100px;top:611.5px;width:157px;height:5px;background:linear-gradient(90deg,#000 0%,#4a073e 28%,#b00f95 60%,#ff10d8 100%);box-shadow:0 0 0 1px #4a4a4a"></div>
<svg style="left:139px;top:617.0px" width="12" height="9" viewBox="0 0 12 9"><path d="M6 0 L11.500 5.500 V8.500 H0.500 V5.500 Z" fill="#c8c8c8"></path></svg>
<div class="fld" style="left:269.5px;top:602px;width:61px;height:24.500px;background:#454545"></div>
<span class="t w" style="left: 275.5px; font-size: 15px; -webkit-text-stroke: 0.6px rgb(242, 242, 242); letter-spacing: 0.79px; top: 606.9px;">28,63</span>
<span class="t" style="left: 333px; font-size: 13px; color: rgb(214, 214, 214); top: 608.6px;">%</span>
<svg style="left:367.5px;top:527.5px" width="13" height="9" viewBox="0 0 13 9"><path d="M0 1H13 M0 4.500H13 M0 8H13" stroke="#b8b8b8" stroke-width="1.200"></path></svg>
<span class="t" style="left: 613px; font-size: 13px; color: rgb(208, 208, 208); letter-spacing: -0.54px; top: 502.6px;">Sans</span>
<svg style="left:609px;top:526px" width="26" height="14" viewBox="0 0 26 14"><rect x="0.700" y="0.7" width="20.600" height="12.600" fill="#7e7e7e" stroke="#b8b8b8" stroke-width="1.400"></rect><path d="M7.500 0.700V13.300 M14.500 0.700V13.300 M0.700 7H21.300" stroke="#b8b8b8" stroke-width="1.400"></path><path d="M22.500 11 h3 l-1.500 2.200z" fill="#b8b8b8"></path></svg>
<span class="t" style="left: 653.5px; font-size: 14px; color: rgb(208, 208, 208); letter-spacing: -0.29px; top: 94.6px;">Groupes de couleurs</span>
<div class="a" style="left:654px;top:115.5px;width:312px;height:516px;border:1px solid #5e5e5e"></div>
<div class="a" style="left:655px;top:117px;width:310px;height:35px;background:#4f6882"></div>
<svg style="left:663px;top:129px" width="6" height="10" viewBox="0 0 6 10"><path d="M0.7 0.7 L5 5 L0.7 9.3" fill="none" stroke="#e4e4e4" stroke-width="1.300"></path></svg>
<svg style="left:687px;top:124px" width="103" height="22" viewBox="0 0 103 22"><rect width="103" height="22" fill="#000"></rect><rect x="2" y="2" width="20" height="18" fill="#4a073e"></rect><rect x="22" y="2" width="20" height="18" fill="#ffa8f0"></rect><path d="M42 12 V20 H34 Z" fill="#fff"></path><path d="M42 12 L34 20" stroke="#000" stroke-width="1.200"></path><rect x="42" y="2" width="20" height="18" fill="#cc1d85"></rect><path d="M62 12 V20 H54 Z" fill="#fff"></path><path d="M62 12 L54 20" stroke="#000" stroke-width="1.200"></path><rect x="62" y="2" width="20" height="18" fill="#fa4600"></rect><path d="M82 12 V20 H74 Z" fill="#fff"></path><path d="M82 12 L74 20" stroke="#000" stroke-width="1.200"></path><rect x="82" y="2" width="19" height="18" fill="#5a6400"></rect><path d="M101 12 V20 H93 Z" fill="#fff"></path><path d="M101 12 L93 20" stroke="#000" stroke-width="1.200"></path></svg>
<span class="t" style="left: 794px; font-size: 15px; font-style: italic; color: rgb(240, 240, 240); letter-spacing: 0.71px; top: 127.9px;">hot</span>
<svg style="left:978px;top:402px" width="8" height="15" viewBox="0 0 8 15"><path d="M8 0 V15 L0 7.500 Z" fill="#d0d0d0"></path></svg>
<div class="a" style="left:26px;top:672px;width:15px;height:15px;background:#cfcfcf;border-radius:2px"></div>
<svg style="left:28.5px;top:675px" width="10" height="9" viewBox="0 0 10 9"><path d="M1 4.500 L3.800 7.500 L9 1" fill="none" stroke="#3a3a3a" stroke-width="1.800"></path></svg>
<span class="t b w" style="left: 47.5px; font-size: 15px; letter-spacing: 0.14px; top: 672.9px;">Ouvrir la boîte de dialogue Redéfinition avancée des couleurs de l’illustration au démarrage</span>
<div class="a" style="left:26px;top:697.5px;width:15px;height:15px;background:#cfcfcf;border-radius:2px"></div>
<svg style="left:28.5px;top:700.5px" width="10" height="9" viewBox="0 0 10 9"><path d="M1 4.500 L3.800 7.500 L9 1" fill="none" stroke="#3a3a3a" stroke-width="1.800"></path></svg>
<span class="t b w" style="left: 47.5px; font-size: 15px; letter-spacing: 0.06px; top: 697.7px;">Redéfinir les couleurs de l'illustration</span>
<div class="a" style="left:24.5px;top:739.5px;width:197px;height:32.500px;border:1.500px solid #f0f0f0;border-radius:17px"></div>
<span class="t b w" style="left: 37.5px; font-size: 15px; letter-spacing: 0px; top: 748.9px;">Recoloration générative</span>
<div class="a" style="left:730px;top:739.5px;width:115px;height:32.500px;border:1.500px solid #f0f0f0;border-radius:17px"></div>
<span class="t b w" style="left: 759px; font-size: 15.5px; letter-spacing: -0.22px; top: 748.9px;">Annuler</span>
<div class="a" style="left:851px;top:739px;width:115.500px;height:33.500px;border:2.500px solid #fff;border-radius:17px"></div>
<span class="t b w" style="left: 898px; font-size: 15.5px; letter-spacing: -0.87px; top: 748.9px;">OK</span>
</div>


</body></html>
